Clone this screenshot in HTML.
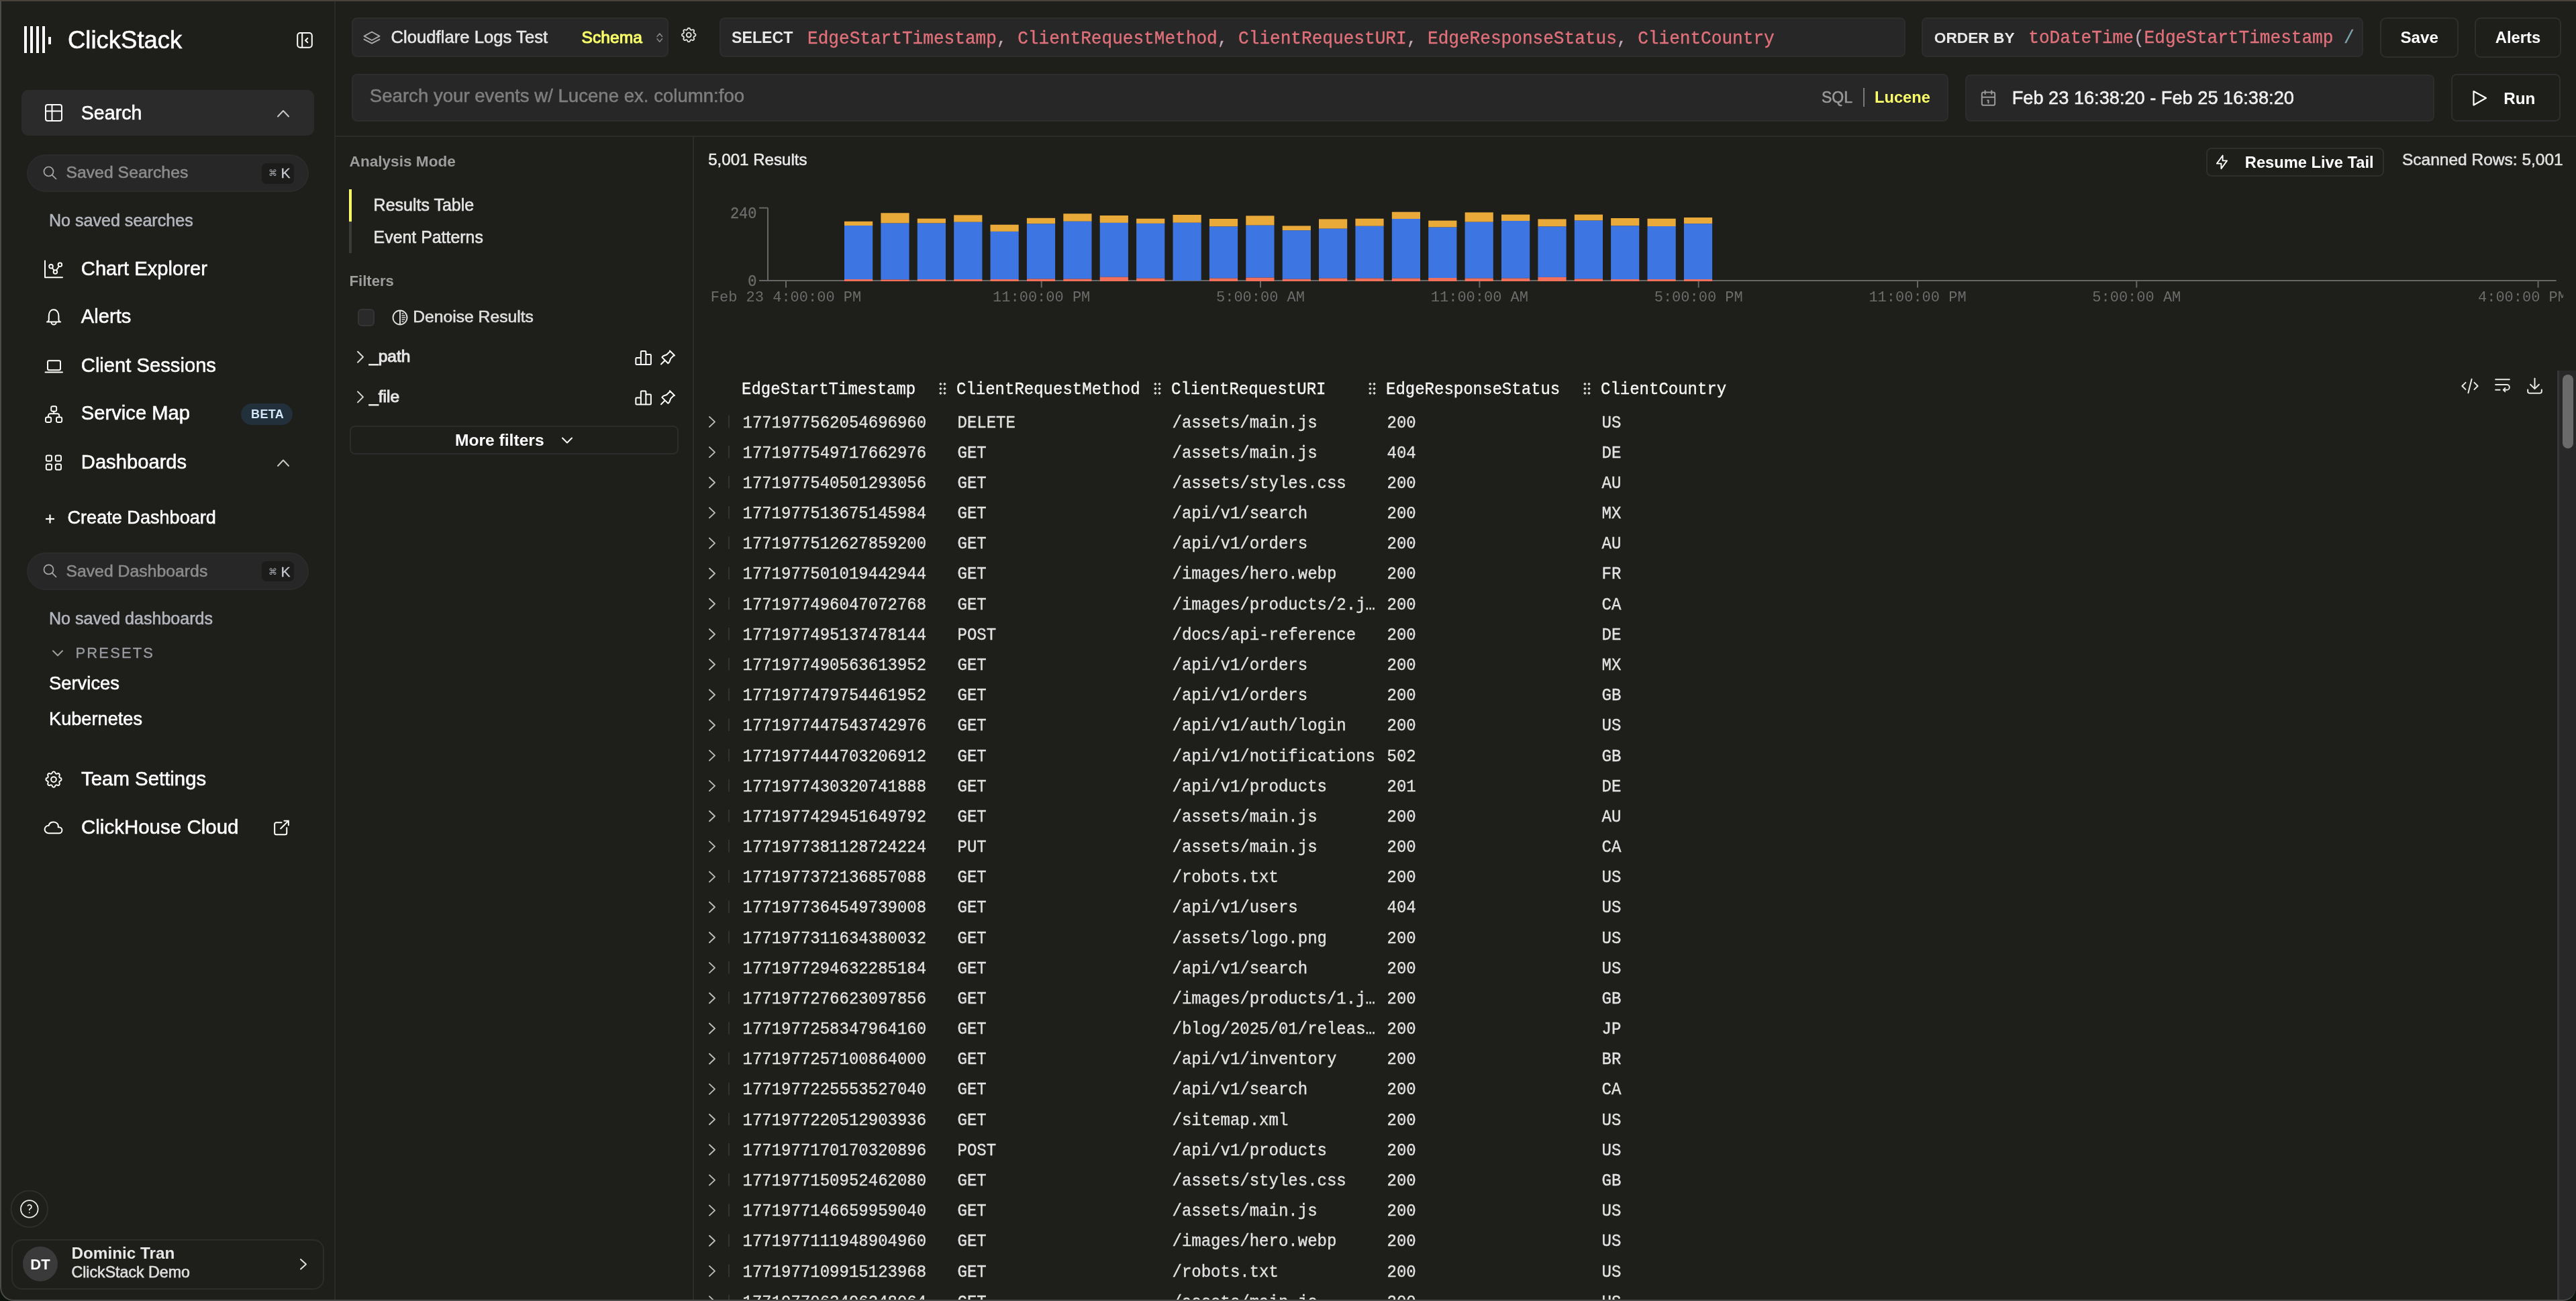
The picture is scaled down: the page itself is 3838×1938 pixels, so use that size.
<!DOCTYPE html>
<html><head><meta charset="utf-8"><title>ClickStack</title>
<style>
html,body{margin:0;padding:0;}
body{width:3838px;height:1938px;overflow:hidden;background:#0E150E;position:relative;font-family:"Liberation Sans",sans-serif;}
#win{position:absolute;left:0;top:0;width:3838px;height:1938px;background:#1E1E1B;border-radius:0 0 20px 20px;overflow:hidden;}
.t{position:absolute;white-space:nowrap;}
#txt{position:absolute;left:0;top:0;width:3838px;height:1938px;will-change:transform;}
.b{position:absolute;}
svg{position:absolute;left:0;top:0;}
#frame{position:absolute;left:0;top:0;width:3838px;height:1938px;box-sizing:border-box;border-top:2px solid #47423A;border-left:2px solid #4B4B49;border-bottom:2px solid #4B4B49;border-radius:0 0 20px 20px;}
</style></head><body><div id="win">
<div class="b" style="left:35.50px;top:38.50px;width:4.60px;height:40.80px;background:#FFFFFF;border-radius:0px;box-sizing:border-box;"></div>
<div class="b" style="left:44.50px;top:38.50px;width:4.60px;height:40.80px;background:#FFFFFF;border-radius:0px;box-sizing:border-box;"></div>
<div class="b" style="left:53.50px;top:38.50px;width:4.60px;height:40.80px;background:#FFFFFF;border-radius:0px;box-sizing:border-box;"></div>
<div class="b" style="left:62.50px;top:38.50px;width:4.60px;height:40.80px;background:#FFFFFF;border-radius:0px;box-sizing:border-box;"></div>
<div class="b" style="left:71.60px;top:54.50px;width:4.60px;height:11.00px;background:#FFFFFF;border-radius:0px;box-sizing:border-box;"></div>
<div class="b" style="left:498.00px;top:0.00px;width:2.00px;height:1936.00px;background:#2A2A28;border-radius:0px;box-sizing:border-box;"></div>
<div class="b" style="left:32.30px;top:134.40px;width:435.70px;height:67.30px;background:#2B2B2B;border-radius:10px;box-sizing:border-box;"></div>
<div class="b" style="left:40.00px;top:230.00px;width:420.00px;height:56.00px;background:#272727;border:2px solid #2B2B2B;border-radius:28.0px;box-sizing:border-box;"></div>
<div class="b" style="left:390.00px;top:243.00px;width:48.00px;height:30.50px;background:#1C1C1A;border-radius:7px;box-sizing:border-box;"></div>
<div class="b" style="left:359.30px;top:600.90px;width:76.40px;height:31.80px;background:#22303B;border-radius:16px;box-sizing:border-box;"></div>
<div class="b" style="left:40.00px;top:823.00px;width:420.00px;height:55.80px;background:#272727;border:2px solid #2B2B2B;border-radius:27.899999999999977px;box-sizing:border-box;"></div>
<div class="b" style="left:390.00px;top:835.90px;width:48.00px;height:30.50px;background:#1C1C1A;border-radius:7px;box-sizing:border-box;"></div>
<div class="b" style="left:16.50px;top:1845.80px;width:466.50px;height:75.20px;background:none;border:2px solid #2C2C2A;border-radius:16px;box-sizing:border-box;"></div>
<div class="b" style="left:524.00px;top:26.00px;width:471.50px;height:59.00px;background:#272727;border:2px solid #2D2D2D;border-radius:8px;box-sizing:border-box;"></div>
<div class="b" style="left:1072.40px;top:26.00px;width:1766.20px;height:59.00px;background:#272727;border:2px solid #2D2D2D;border-radius:8px;box-sizing:border-box;"></div>
<div class="b" style="left:2863.40px;top:26.00px;width:657.60px;height:59.00px;background:#272727;border:2px solid #2D2D2D;border-radius:8px;box-sizing:border-box;"></div>
<div class="b" style="left:3546.20px;top:25.80px;width:116.50px;height:60.20px;background:#1E1E1B;border:2px solid #2E2E2E;border-radius:9px;box-sizing:border-box;"></div>
<div class="b" style="left:3687.20px;top:25.80px;width:128.80px;height:60.20px;background:#1E1E1B;border:2px solid #2E2E2E;border-radius:9px;box-sizing:border-box;"></div>
<div class="b" style="left:524.00px;top:110.00px;width:2378.50px;height:71.00px;background:#272727;border:2px solid #2D2D2D;border-radius:8px;box-sizing:border-box;"></div>
<div class="b" style="left:2775.50px;top:131.00px;width:2.00px;height:28.00px;background:#7A7A7A;border-radius:0px;box-sizing:border-box;"></div>
<div class="b" style="left:2927.50px;top:110.50px;width:699.30px;height:70.50px;background:#272727;border:2px solid #2D2D2D;border-radius:8px;box-sizing:border-box;"></div>
<div class="b" style="left:3651.70px;top:110.00px;width:163.30px;height:71.00px;background:#1E1E1B;border:2px solid #2E2E2E;border-radius:8px;box-sizing:border-box;"></div>
<div class="b" style="left:500.00px;top:202.00px;width:3338.00px;height:2.00px;background:#2C2C2A;border-radius:0px;box-sizing:border-box;"></div>
<div class="b" style="left:1031.50px;top:204.00px;width:2.00px;height:1732.00px;background:#2C2C2A;border-radius:0px;box-sizing:border-box;"></div>
<div class="b" style="left:520.00px;top:330.00px;width:4.00px;height:47.00px;background:#3A3A3A;border-radius:0px;box-sizing:border-box;"></div>
<div class="b" style="left:520.00px;top:282.00px;width:4.00px;height:48.00px;background:#FAFF69;border-radius:0px;box-sizing:border-box;"></div>
<div class="b" style="left:532.50px;top:460.20px;width:25.10px;height:25.50px;background:#2A2A2A;border:2px solid #353535;border-radius:6px;box-sizing:border-box;"></div>
<div class="b" style="left:520.60px;top:634.00px;width:490.40px;height:43.00px;background:#1E1E1B;border:2px solid #2C2C2C;border-radius:8px;box-sizing:border-box;"></div>
<div class="b" style="left:3287.00px;top:220.20px;width:265.40px;height:42.90px;background:#1E1E1B;border:2px solid #2E2E2E;border-radius:8px;box-sizing:border-box;"></div>
<div class="b" style="left:3810.00px;top:552.00px;width:28.00px;height:1384.00px;background:#282828;border-radius:0px;box-sizing:border-box;"></div>
<div class="b" style="left:3810.00px;top:552.00px;width:2.50px;height:1384.00px;background:#363636;border-radius:0px;box-sizing:border-box;"></div>
<div class="b" style="left:3818.00px;top:558.00px;width:16.00px;height:110.00px;background:#6A6A6A;border-radius:8px;box-sizing:border-box;"></div>
<svg width="3838" height="1938" viewBox="0 0 3838 1938">
<rect x="443.2" y="49" width="21.6" height="21.7" rx="4" fill="none" stroke="#fff" stroke-width="2"/>
<line x1="450.2" y1="49" x2="450.2" y2="70.7" stroke="#fff" stroke-width="2"/>
<polyline points="458.3,57 455,60.2 458.3,63.3" fill="none" stroke="#fff" stroke-width="2" stroke-linecap="round" stroke-linejoin="round"/>
<rect x="68" y="156" width="24" height="24" rx="3" fill="none" stroke="#fff" stroke-width="2"/>
<line x1="68" y1="165.5" x2="92" y2="165.5" stroke="#fff" stroke-width="2"/><line x1="77.5" y1="156" x2="77.5" y2="180" stroke="#fff" stroke-width="2"/>
<polyline points="414,173.5 422,165 430,173.5" fill="none" stroke="#c8c8c8" stroke-width="2" stroke-linecap="round" stroke-linejoin="round"/>
<circle cx="72.5" cy="255.5" r="7" fill="none" stroke="#a8a8a8" stroke-width="1.7"/>
<line x1="77.8" y1="260.8" x2="83.5" y2="266.5" stroke="#a8a8a8" stroke-width="1.7" stroke-linecap="round"/>
<polyline points="67,388.5 67,413.2 93,413.2" fill="none" stroke="#fff" stroke-width="2" stroke-linecap="round" stroke-linejoin="round"/>
<circle cx="76" cy="396.8" r="2.8" fill="none" stroke="#fff" stroke-width="1.9"/>
<circle cx="82.4" cy="405" r="2.8" fill="none" stroke="#fff" stroke-width="1.9"/>
<circle cx="89.4" cy="394.3" r="2.8" fill="none" stroke="#fff" stroke-width="1.9"/>
<line x1="78" y1="399.3" x2="80.5" y2="402.5" stroke="#fff" stroke-width="1.9"/><line x1="84" y1="402.5" x2="88" y2="396.8" stroke="#fff" stroke-width="1.9"/>
<path d="M80 461.3 C75 461.3 72.8 466 72.8 471 L72.8 476 C72.8 478 71 479.6 70 479.6 L90.2 479.6 C89.2 479.6 87.4 478 87.4 476 L87.4 471 C87.4 466 85 461.3 80 461.3 Z" fill="none" stroke="#fff" stroke-width="2" stroke-linejoin="round"/>
<path d="M76.5 480 A3.6 3.6 0 0 0 83.7 480" fill="none" stroke="#fff" stroke-width="2"/>
<rect x="71" y="537.2" width="19" height="14" rx="2" fill="none" stroke="#fff" stroke-width="2"/>
<line x1="67.5" y1="554.6" x2="93" y2="554.6" stroke="#fff" stroke-width="2" stroke-linecap="round"/>
<rect x="76.2" y="605.2" width="8" height="7.5" rx="2.2" fill="none" stroke="#fff" stroke-width="1.9"/>
<rect x="68" y="621.5" width="8.2" height="7.5" rx="2.2" fill="none" stroke="#fff" stroke-width="1.9"/>
<rect x="84" y="621.5" width="8.2" height="7.5" rx="2.2" fill="none" stroke="#fff" stroke-width="1.9"/>
<path d="M80.2 612.7 V616.3 M72 621.5 V619 A2.7 2.7 0 0 1 74.7 616.3 H85.5 A2.7 2.7 0 0 1 88.2 619 V621.5" fill="none" stroke="#fff" stroke-width="1.9"/>
<rect x="68.8" y="678.5" width="8.2" height="8.2" rx="2" fill="none" stroke="#fff" stroke-width="1.9"/>
<rect x="82.8" y="678.5" width="8.2" height="8.2" rx="2" fill="none" stroke="#fff" stroke-width="1.9"/>
<rect x="68.8" y="691.5" width="8.2" height="8.2" rx="2" fill="none" stroke="#fff" stroke-width="1.9"/>
<rect x="82.8" y="691.5" width="8.2" height="8.2" rx="2" fill="none" stroke="#fff" stroke-width="1.9"/>
<polyline points="414,694 422,685.5 430,694" fill="none" stroke="#c8c8c8" stroke-width="2" stroke-linecap="round" stroke-linejoin="round"/>
<line x1="68" y1="773" x2="81" y2="773" stroke="#fff" stroke-width="2.2"/><line x1="74.5" y1="766.5" x2="74.5" y2="779.5" stroke="#fff" stroke-width="2.2"/>
<circle cx="72.5" cy="848.4" r="7" fill="none" stroke="#a8a8a8" stroke-width="1.7"/>
<line x1="77.8" y1="853.7" x2="83.5" y2="859.4" stroke="#a8a8a8" stroke-width="1.7" stroke-linecap="round"/>
<polyline points="79,969.5 86,976.5 93,969.5" fill="none" stroke="#a0a0a0" stroke-width="2" stroke-linecap="round" stroke-linejoin="round"/>
<g transform="translate(64.50 1145.50) scale(1.2917)" fill="none" stroke="#fff" stroke-width="1.548" stroke-linecap="round" stroke-linejoin="round"><path d="M10.325 4.317c.426 -1.756 2.924 -1.756 3.35 0a1.724 1.724 0 0 0 2.573 1.066c1.543 -.94 3.31 .826 2.37 2.37a1.724 1.724 0 0 0 1.065 2.572c1.756 .426 1.756 2.924 0 3.35a1.724 1.724 0 0 0 -1.066 2.573c.94 1.543 -.826 3.31 -2.37 2.37a1.724 1.724 0 0 0 -2.572 1.065c-.426 1.756 -2.924 1.756 -3.35 0a1.724 1.724 0 0 0 -2.573 -1.066c-1.543 .94 -3.31 -.826 -2.37 -2.37a1.724 1.724 0 0 0 -1.065 -2.572c-1.756 -.426 -1.756 -2.924 0 -3.35a1.724 1.724 0 0 0 1.066 -2.573c-.94 -1.543 .826 -3.31 2.37 -2.37c1 .608 2.296 .07 2.572 -1.065z M9 12a3 3 0 1 0 6 0a3 3 0 0 0 -6 0"/></g>
<g transform="translate(64.00 1218.00) scale(1.2917)" fill="none" stroke="#fff" stroke-width="1.548" stroke-linecap="round" stroke-linejoin="round"><path d="M6.657 18c-2.572 0 -4.657 -2.007 -4.657 -4.483c0 -2.475 2.085 -4.482 4.657 -4.482c.393 -1.762 1.794 -3.2 3.675 -3.773c1.88 -.572 3.956 -.193 5.444 1c1.488 1.19 2.162 3.007 1.77 4.769h.99c1.913 0 3.464 1.56 3.464 3.486c0 1.927 -1.551 3.487 -3.465 3.487h-11.878"/></g>
<g transform="translate(404.00 1217.50) scale(1.2917)" fill="none" stroke="#fff" stroke-width="1.548" stroke-linecap="round" stroke-linejoin="round"><path d="M12 6h-6a2 2 0 0 0 -2 2v10a2 2 0 0 0 2 2h10a2 2 0 0 0 2 -2v-6 M11 13l9 -9 M15 4h5v5"/></g>
<circle cx="43.8" cy="1800.9" r="27.2" fill="none" stroke="#2E2E2E" stroke-width="2"/>
<circle cx="43.8" cy="1800.9" r="12.8" fill="none" stroke="#ececec" stroke-width="1.8"/>
<g transform="translate(29.80 1786.50) scale(1.1667)" fill="none" stroke="#ececec" stroke-width="1.543" stroke-linecap="round" stroke-linejoin="round"><path d="M12 17l0 .01 M12 13.5a1.5 1.5 0 0 1 1 -1.5a2.6 2.6 0 1 0 -3 -4"/></g>
<circle cx="60" cy="1882.7" r="26" fill="#3A3A3A"/>
<polyline points="448,1876 456,1883.2 448,1890.4" fill="none" stroke="#e0e0e0" stroke-width="2" stroke-linecap="round" stroke-linejoin="round"/>
<path d="M554 47.5 L565.5 53.8 L554 60 L542.5 53.8 Z M542.5 58.6 L554 64.6 L565.5 58.6" fill="none" stroke="#a8a8a8" stroke-width="1.9" stroke-linejoin="round" stroke-linecap="round"/>
<polyline points="979,54.5 982.8,50 986.6,54.5" fill="none" stroke="#8a8a8a" stroke-width="1.5" stroke-linecap="round" stroke-linejoin="round"/>
<polyline points="979,57.8 982.8,62.3 986.6,57.8" fill="none" stroke="#8a8a8a" stroke-width="1.5" stroke-linecap="round" stroke-linejoin="round"/>
<g transform="translate(1012.50 38.30) scale(1.1458)" fill="none" stroke="#e0e0e0" stroke-width="1.658" stroke-linecap="round" stroke-linejoin="round"><path d="M10.325 4.317c.426 -1.756 2.924 -1.756 3.35 0a1.724 1.724 0 0 0 2.573 1.066c1.543 -.94 3.31 .826 2.37 2.37a1.724 1.724 0 0 0 1.065 2.572c1.756 .426 1.756 2.924 0 3.35a1.724 1.724 0 0 0 -1.066 2.573c.94 1.543 -.826 3.31 -2.37 2.37a1.724 1.724 0 0 0 -2.572 1.065c-.426 1.756 -2.924 1.756 -3.35 0a1.724 1.724 0 0 0 -2.573 -1.066c-1.543 .94 -3.31 -.826 -2.37 -2.37a1.724 1.724 0 0 0 -1.065 -2.572c-1.756 -.426 -1.756 -2.924 0 -3.35a1.724 1.724 0 0 0 1.066 -2.573c-.94 -1.543 .826 -3.31 2.37 -2.37c1 .608 2.296 .07 2.572 -1.065z M9 12a3 3 0 1 0 6 0a3 3 0 0 0 -6 0"/></g>
<g transform="translate(2948.00 131.50) scale(1.2083)" fill="none" stroke="#9A9A9A" stroke-width="1.655" stroke-linecap="round" stroke-linejoin="round"><path d="M4 7a2 2 0 0 1 2 -2h12a2 2 0 0 1 2 2v12a2 2 0 0 1 -2 2h-12a2 2 0 0 1 -2 -2v-12z M16 3v4 M8 3v4 M4 11h16 M11 15h1 M12 15v3"/></g>
<path d="M3685.5 136 L3704 146 L3685.5 156.5 Z" fill="none" stroke="#fff" stroke-width="2.2" stroke-linejoin="round"/>
<circle cx="596" cy="473" r="10.5" fill="none" stroke="#e0e0e0" stroke-width="1.9"/>
<line x1="596" y1="462.5" x2="596" y2="483.5" stroke="#e0e0e0" stroke-width="1.9"/>
<line x1="598.5" y1="467" x2="601.5" y2="467" stroke="#e0e0e0" stroke-width="1.4"/>
<line x1="598.5" y1="470" x2="603.5" y2="470" stroke="#e0e0e0" stroke-width="1.4"/>
<line x1="598.5" y1="473" x2="604.5" y2="473" stroke="#e0e0e0" stroke-width="1.4"/>
<line x1="598.5" y1="476" x2="603.5" y2="476" stroke="#e0e0e0" stroke-width="1.4"/>
<line x1="598.5" y1="479" x2="601.5" y2="479" stroke="#e0e0e0" stroke-width="1.4"/>
<polyline points="533,523.7 541,531.7 533,539.7" fill="none" stroke="#d8d8d8" stroke-width="2" stroke-linecap="round" stroke-linejoin="round"/>
<g transform="translate(943.60 517.90) scale(1.2500)" fill="none" stroke="#fff" stroke-width="1.600" stroke-linecap="round" stroke-linejoin="round"><path d="M3 13a1 1 0 0 1 1 -1h4a1 1 0 0 1 1 1v6a1 1 0 0 1 -1 1h-4a1 1 0 0 1 -1 -1z M15 9a1 1 0 0 1 1 -1h4a1 1 0 0 1 1 1v10a1 1 0 0 1 -1 1h-4a1 1 0 0 1 -1 -1z M9 5a1 1 0 0 1 1 -1h4a1 1 0 0 1 1 1v14a1 1 0 0 1 -1 1h-4a1 1 0 0 1 -1 -1z M4 20h14"/></g>
<g transform="translate(979.20 517.30) scale(1.2917)" fill="none" stroke="#fff" stroke-width="1.548" stroke-linecap="round" stroke-linejoin="round"><path d="M15 4.5l-4 4l-4 1.5l-1.5 1.5l7 7l1.5 -1.5l1.5 -4l4 -4 M9 15l-4.5 4.5 M14.5 4l5.5 5.5"/></g>
<polyline points="533,583.4 541,591.4 533,599.4" fill="none" stroke="#d8d8d8" stroke-width="2" stroke-linecap="round" stroke-linejoin="round"/>
<g transform="translate(943.60 577.60) scale(1.2500)" fill="none" stroke="#fff" stroke-width="1.600" stroke-linecap="round" stroke-linejoin="round"><path d="M3 13a1 1 0 0 1 1 -1h4a1 1 0 0 1 1 1v6a1 1 0 0 1 -1 1h-4a1 1 0 0 1 -1 -1z M15 9a1 1 0 0 1 1 -1h4a1 1 0 0 1 1 1v10a1 1 0 0 1 -1 1h-4a1 1 0 0 1 -1 -1z M9 5a1 1 0 0 1 1 -1h4a1 1 0 0 1 1 1v14a1 1 0 0 1 -1 1h-4a1 1 0 0 1 -1 -1z M4 20h14"/></g>
<g transform="translate(979.20 577.00) scale(1.2917)" fill="none" stroke="#fff" stroke-width="1.548" stroke-linecap="round" stroke-linejoin="round"><path d="M15 4.5l-4 4l-4 1.5l-1.5 1.5l7 7l1.5 -1.5l1.5 -4l4 -4 M9 15l-4.5 4.5 M14.5 4l5.5 5.5"/></g>
<polyline points="838,652.5 845,659.5 852,652.5" fill="none" stroke="#fff" stroke-width="2" stroke-linecap="round" stroke-linejoin="round"/>
<g transform="translate(3297.50 228.50) scale(1.0833)" fill="none" stroke="#fff" stroke-width="1.754" stroke-linecap="round" stroke-linejoin="round"><path d="M13 3l0 7l6 0l-8 11l0 -7l-6 0l8 -11"/></g>
<line x1="1144" y1="309.5" x2="1144" y2="418" stroke="#666666" stroke-width="2"/>
<line x1="1131" y1="309.7" x2="1144" y2="309.7" stroke="#666666" stroke-width="2"/>
<line x1="1131" y1="418" x2="3808.6" y2="418" stroke="#666666" stroke-width="2"/>
<line x1="1171.0" y1="418" x2="1171.0" y2="428.5" stroke="#666666" stroke-width="2"/>
<line x1="1551.7" y1="418" x2="1551.7" y2="428.5" stroke="#666666" stroke-width="2"/>
<line x1="1878.0" y1="418" x2="1878.0" y2="428.5" stroke="#666666" stroke-width="2"/>
<line x1="2204.4" y1="418" x2="2204.4" y2="428.5" stroke="#666666" stroke-width="2"/>
<line x1="2530.7" y1="418" x2="2530.7" y2="428.5" stroke="#666666" stroke-width="2"/>
<line x1="2857.0" y1="418" x2="2857.0" y2="428.5" stroke="#666666" stroke-width="2"/>
<line x1="3183.3" y1="418" x2="3183.3" y2="428.5" stroke="#666666" stroke-width="2"/>
<line x1="3781.6" y1="418" x2="3781.6" y2="428.5" stroke="#666666" stroke-width="2"/>
<rect x="1258.0" y="329.8" width="42.2" height="6.2" fill="#E9AA3A"/>
<rect x="1258.0" y="336" width="42.2" height="80.0" fill="#3D76E2"/>
<rect x="1258.0" y="416" width="42.2" height="3.0" fill="#F3705A"/>
<rect x="1312.4" y="317.3" width="42.2" height="15.3" fill="#E9AA3A"/>
<rect x="1312.4" y="332.6" width="42.2" height="83.9" fill="#3D76E2"/>
<rect x="1312.4" y="416.5" width="42.2" height="2.5" fill="#F3705A"/>
<rect x="1366.8" y="325.6" width="42.2" height="7.0" fill="#E9AA3A"/>
<rect x="1366.8" y="332.6" width="42.2" height="83.4" fill="#3D76E2"/>
<rect x="1366.8" y="416" width="42.2" height="3.0" fill="#F3705A"/>
<rect x="1421.2" y="320.4" width="42.2" height="10.4" fill="#E9AA3A"/>
<rect x="1421.2" y="330.8" width="42.2" height="85.2" fill="#3D76E2"/>
<rect x="1421.2" y="416" width="42.2" height="3.0" fill="#F3705A"/>
<rect x="1475.5" y="334.7" width="42.2" height="10.2" fill="#E9AA3A"/>
<rect x="1475.5" y="344.9" width="42.2" height="71.1" fill="#3D76E2"/>
<rect x="1475.5" y="416" width="42.2" height="3.0" fill="#F3705A"/>
<rect x="1529.9" y="324.8" width="42.2" height="8.6" fill="#E9AA3A"/>
<rect x="1529.9" y="333.4" width="42.2" height="82.1" fill="#3D76E2"/>
<rect x="1529.9" y="415.5" width="42.2" height="3.5" fill="#F3705A"/>
<rect x="1584.3" y="318.3" width="42.2" height="11.5" fill="#E9AA3A"/>
<rect x="1584.3" y="329.8" width="42.2" height="85.7" fill="#3D76E2"/>
<rect x="1584.3" y="415.5" width="42.2" height="3.5" fill="#F3705A"/>
<rect x="1638.7" y="321" width="42.2" height="10.9" fill="#E9AA3A"/>
<rect x="1638.7" y="331.9" width="42.2" height="80.8" fill="#3D76E2"/>
<rect x="1638.7" y="412.7" width="42.2" height="6.3" fill="#F3705A"/>
<rect x="1693.1" y="325.7" width="42.2" height="7.2" fill="#E9AA3A"/>
<rect x="1693.1" y="332.9" width="42.2" height="81.7" fill="#3D76E2"/>
<rect x="1693.1" y="414.6" width="42.2" height="4.4" fill="#F3705A"/>
<rect x="1747.5" y="320" width="42.2" height="11.8" fill="#E9AA3A"/>
<rect x="1747.5" y="331.8" width="42.2" height="86.2" fill="#3D76E2"/>
<rect x="1801.9" y="326" width="42.2" height="11.5" fill="#E9AA3A"/>
<rect x="1801.9" y="337.5" width="42.2" height="77.1" fill="#3D76E2"/>
<rect x="1801.9" y="414.6" width="42.2" height="4.4" fill="#F3705A"/>
<rect x="1856.3" y="321.4" width="42.2" height="14.3" fill="#E9AA3A"/>
<rect x="1856.3" y="335.7" width="42.2" height="77.9" fill="#3D76E2"/>
<rect x="1856.3" y="413.6" width="42.2" height="5.4" fill="#F3705A"/>
<rect x="1910.7" y="336.4" width="42.2" height="6.8" fill="#E9AA3A"/>
<rect x="1910.7" y="343.2" width="42.2" height="72.5" fill="#3D76E2"/>
<rect x="1910.7" y="415.7" width="42.2" height="3.3" fill="#F3705A"/>
<rect x="1965.0" y="326.4" width="42.2" height="14.3" fill="#E9AA3A"/>
<rect x="1965.0" y="340.7" width="42.2" height="73.9" fill="#3D76E2"/>
<rect x="1965.0" y="414.6" width="42.2" height="4.4" fill="#F3705A"/>
<rect x="2019.4" y="325.7" width="42.2" height="11.1" fill="#E9AA3A"/>
<rect x="2019.4" y="336.8" width="42.2" height="77.8" fill="#3D76E2"/>
<rect x="2019.4" y="414.6" width="42.2" height="4.4" fill="#F3705A"/>
<rect x="2073.8" y="315.7" width="42.2" height="10.3" fill="#E9AA3A"/>
<rect x="2073.8" y="326" width="42.2" height="88.6" fill="#3D76E2"/>
<rect x="2073.8" y="414.6" width="42.2" height="4.4" fill="#F3705A"/>
<rect x="2128.2" y="328.6" width="42.2" height="10.0" fill="#E9AA3A"/>
<rect x="2128.2" y="338.6" width="42.2" height="75.4" fill="#3D76E2"/>
<rect x="2128.2" y="414" width="42.2" height="5.0" fill="#F3705A"/>
<rect x="2182.6" y="316.4" width="42.2" height="14.3" fill="#E9AA3A"/>
<rect x="2182.6" y="330.7" width="42.2" height="83.9" fill="#3D76E2"/>
<rect x="2182.6" y="414.6" width="42.2" height="4.4" fill="#F3705A"/>
<rect x="2237.0" y="319.6" width="42.2" height="9.4" fill="#E9AA3A"/>
<rect x="2237.0" y="329" width="42.2" height="85.6" fill="#3D76E2"/>
<rect x="2237.0" y="414.6" width="42.2" height="4.4" fill="#F3705A"/>
<rect x="2291.4" y="326.4" width="42.2" height="11.1" fill="#E9AA3A"/>
<rect x="2291.4" y="337.5" width="42.2" height="75.4" fill="#3D76E2"/>
<rect x="2291.4" y="412.9" width="42.2" height="6.1" fill="#F3705A"/>
<rect x="2345.8" y="319.6" width="42.2" height="9.0" fill="#E9AA3A"/>
<rect x="2345.8" y="328.6" width="42.2" height="86.8" fill="#3D76E2"/>
<rect x="2345.8" y="415.4" width="42.2" height="3.6" fill="#F3705A"/>
<rect x="2400.1" y="325" width="42.2" height="11.4" fill="#E9AA3A"/>
<rect x="2400.1" y="336.4" width="42.2" height="79.6" fill="#3D76E2"/>
<rect x="2400.1" y="416" width="42.2" height="3.0" fill="#F3705A"/>
<rect x="2454.5" y="325.7" width="42.2" height="11.3" fill="#E9AA3A"/>
<rect x="2454.5" y="337" width="42.2" height="79.0" fill="#3D76E2"/>
<rect x="2454.5" y="416" width="42.2" height="3.0" fill="#F3705A"/>
<rect x="2508.9" y="324" width="42.2" height="9.2" fill="#E9AA3A"/>
<rect x="2508.9" y="333.2" width="42.2" height="82.8" fill="#3D76E2"/>
<rect x="2508.9" y="416" width="42.2" height="3.0" fill="#F3705A"/>
<rect x="1399.80" y="570.40" width="3.2" height="3.2" fill="#dcdcdc" transform="rotate(45 1401.40 572.00)"/>
<rect x="1399.80" y="577.30" width="3.2" height="3.2" fill="#dcdcdc" transform="rotate(45 1401.40 578.90)"/>
<rect x="1399.80" y="584.20" width="3.2" height="3.2" fill="#dcdcdc" transform="rotate(45 1401.40 585.80)"/>
<rect x="1405.90" y="570.40" width="3.2" height="3.2" fill="#dcdcdc" transform="rotate(45 1407.50 572.00)"/>
<rect x="1405.90" y="577.30" width="3.2" height="3.2" fill="#dcdcdc" transform="rotate(45 1407.50 578.90)"/>
<rect x="1405.90" y="584.20" width="3.2" height="3.2" fill="#dcdcdc" transform="rotate(45 1407.50 585.80)"/>
<rect x="1719.80" y="570.40" width="3.2" height="3.2" fill="#dcdcdc" transform="rotate(45 1721.40 572.00)"/>
<rect x="1719.80" y="577.30" width="3.2" height="3.2" fill="#dcdcdc" transform="rotate(45 1721.40 578.90)"/>
<rect x="1719.80" y="584.20" width="3.2" height="3.2" fill="#dcdcdc" transform="rotate(45 1721.40 585.80)"/>
<rect x="1725.90" y="570.40" width="3.2" height="3.2" fill="#dcdcdc" transform="rotate(45 1727.50 572.00)"/>
<rect x="1725.90" y="577.30" width="3.2" height="3.2" fill="#dcdcdc" transform="rotate(45 1727.50 578.90)"/>
<rect x="1725.90" y="584.20" width="3.2" height="3.2" fill="#dcdcdc" transform="rotate(45 1727.50 585.80)"/>
<rect x="2039.80" y="570.40" width="3.2" height="3.2" fill="#dcdcdc" transform="rotate(45 2041.40 572.00)"/>
<rect x="2039.80" y="577.30" width="3.2" height="3.2" fill="#dcdcdc" transform="rotate(45 2041.40 578.90)"/>
<rect x="2039.80" y="584.20" width="3.2" height="3.2" fill="#dcdcdc" transform="rotate(45 2041.40 585.80)"/>
<rect x="2045.90" y="570.40" width="3.2" height="3.2" fill="#dcdcdc" transform="rotate(45 2047.50 572.00)"/>
<rect x="2045.90" y="577.30" width="3.2" height="3.2" fill="#dcdcdc" transform="rotate(45 2047.50 578.90)"/>
<rect x="2045.90" y="584.20" width="3.2" height="3.2" fill="#dcdcdc" transform="rotate(45 2047.50 585.80)"/>
<rect x="2359.80" y="570.40" width="3.2" height="3.2" fill="#dcdcdc" transform="rotate(45 2361.40 572.00)"/>
<rect x="2359.80" y="577.30" width="3.2" height="3.2" fill="#dcdcdc" transform="rotate(45 2361.40 578.90)"/>
<rect x="2359.80" y="584.20" width="3.2" height="3.2" fill="#dcdcdc" transform="rotate(45 2361.40 585.80)"/>
<rect x="2365.90" y="570.40" width="3.2" height="3.2" fill="#dcdcdc" transform="rotate(45 2367.50 572.00)"/>
<rect x="2365.90" y="577.30" width="3.2" height="3.2" fill="#dcdcdc" transform="rotate(45 2367.50 578.90)"/>
<rect x="2365.90" y="584.20" width="3.2" height="3.2" fill="#dcdcdc" transform="rotate(45 2367.50 585.80)"/>
<g transform="translate(3664.50 559.50) scale(1.2917)" fill="none" stroke="#e8e8e8" stroke-width="1.548" stroke-linecap="round" stroke-linejoin="round"><path d="M7 8l-4 4l4 4 M17 8l4 4l-4 4 M14 4l-4 16"/></g>
<g transform="translate(3713.00 557.50) scale(1.2917)" fill="none" stroke="#e8e8e8" stroke-width="1.548" stroke-linecap="round" stroke-linejoin="round"><path d="M4 6l16 0 M4 18l5 0 M4 12h13a3 3 0 0 1 0 6h-4l2 -2m0 4l-2 -2"/></g>
<g transform="translate(3761.00 558.50) scale(1.2917)" fill="none" stroke="#e8e8e8" stroke-width="1.548" stroke-linecap="round" stroke-linejoin="round"><path d="M4 17v2a2 2 0 0 0 2 2h12a2 2 0 0 0 2 -2v-2 M7 11l5 5l5 -5 M12 4l0 12"/></g>
<polyline points="1057,620.9 1065,628.4 1057,635.9" fill="none" stroke="#bdbdbd" stroke-width="1.9" stroke-linecap="round" stroke-linejoin="round"/>
<line x1="1086" y1="618.6" x2="1086" y2="637.2" stroke="#3A3A3A" stroke-width="1.5"/>
<polyline points="1057,666.1 1065,673.6 1057,681.1" fill="none" stroke="#bdbdbd" stroke-width="1.9" stroke-linecap="round" stroke-linejoin="round"/>
<line x1="1086" y1="663.8" x2="1086" y2="682.4" stroke="#3A3A3A" stroke-width="1.5"/>
<polyline points="1057,711.3 1065,718.8 1057,726.3" fill="none" stroke="#bdbdbd" stroke-width="1.9" stroke-linecap="round" stroke-linejoin="round"/>
<line x1="1086" y1="709.0" x2="1086" y2="727.6" stroke="#3A3A3A" stroke-width="1.5"/>
<polyline points="1057,756.4 1065,763.9 1057,771.4" fill="none" stroke="#bdbdbd" stroke-width="1.9" stroke-linecap="round" stroke-linejoin="round"/>
<line x1="1086" y1="754.1" x2="1086" y2="772.7" stroke="#3A3A3A" stroke-width="1.5"/>
<polyline points="1057,801.6 1065,809.1 1057,816.6" fill="none" stroke="#bdbdbd" stroke-width="1.9" stroke-linecap="round" stroke-linejoin="round"/>
<line x1="1086" y1="799.3" x2="1086" y2="817.9" stroke="#3A3A3A" stroke-width="1.5"/>
<polyline points="1057,846.8 1065,854.3 1057,861.8" fill="none" stroke="#bdbdbd" stroke-width="1.9" stroke-linecap="round" stroke-linejoin="round"/>
<line x1="1086" y1="844.5" x2="1086" y2="863.1" stroke="#3A3A3A" stroke-width="1.5"/>
<polyline points="1057,892.0 1065,899.5 1057,907.0" fill="none" stroke="#bdbdbd" stroke-width="1.9" stroke-linecap="round" stroke-linejoin="round"/>
<line x1="1086" y1="889.7" x2="1086" y2="908.3" stroke="#3A3A3A" stroke-width="1.5"/>
<polyline points="1057,937.2 1065,944.7 1057,952.2" fill="none" stroke="#bdbdbd" stroke-width="1.9" stroke-linecap="round" stroke-linejoin="round"/>
<line x1="1086" y1="934.9" x2="1086" y2="953.5" stroke="#3A3A3A" stroke-width="1.5"/>
<polyline points="1057,982.3 1065,989.8 1057,997.3" fill="none" stroke="#bdbdbd" stroke-width="1.9" stroke-linecap="round" stroke-linejoin="round"/>
<line x1="1086" y1="980.0" x2="1086" y2="998.6" stroke="#3A3A3A" stroke-width="1.5"/>
<polyline points="1057,1027.5 1065,1035.0 1057,1042.5" fill="none" stroke="#bdbdbd" stroke-width="1.9" stroke-linecap="round" stroke-linejoin="round"/>
<line x1="1086" y1="1025.2" x2="1086" y2="1043.8" stroke="#3A3A3A" stroke-width="1.5"/>
<polyline points="1057,1072.7 1065,1080.2 1057,1087.7" fill="none" stroke="#bdbdbd" stroke-width="1.9" stroke-linecap="round" stroke-linejoin="round"/>
<line x1="1086" y1="1070.4" x2="1086" y2="1089.0" stroke="#3A3A3A" stroke-width="1.5"/>
<polyline points="1057,1117.9 1065,1125.4 1057,1132.9" fill="none" stroke="#bdbdbd" stroke-width="1.9" stroke-linecap="round" stroke-linejoin="round"/>
<line x1="1086" y1="1115.6" x2="1086" y2="1134.2" stroke="#3A3A3A" stroke-width="1.5"/>
<polyline points="1057,1163.1 1065,1170.6 1057,1178.1" fill="none" stroke="#bdbdbd" stroke-width="1.9" stroke-linecap="round" stroke-linejoin="round"/>
<line x1="1086" y1="1160.8" x2="1086" y2="1179.4" stroke="#3A3A3A" stroke-width="1.5"/>
<polyline points="1057,1208.2 1065,1215.7 1057,1223.2" fill="none" stroke="#bdbdbd" stroke-width="1.9" stroke-linecap="round" stroke-linejoin="round"/>
<line x1="1086" y1="1205.9" x2="1086" y2="1224.5" stroke="#3A3A3A" stroke-width="1.5"/>
<polyline points="1057,1253.4 1065,1260.9 1057,1268.4" fill="none" stroke="#bdbdbd" stroke-width="1.9" stroke-linecap="round" stroke-linejoin="round"/>
<line x1="1086" y1="1251.1" x2="1086" y2="1269.7" stroke="#3A3A3A" stroke-width="1.5"/>
<polyline points="1057,1298.6 1065,1306.1 1057,1313.6" fill="none" stroke="#bdbdbd" stroke-width="1.9" stroke-linecap="round" stroke-linejoin="round"/>
<line x1="1086" y1="1296.3" x2="1086" y2="1314.9" stroke="#3A3A3A" stroke-width="1.5"/>
<polyline points="1057,1343.8 1065,1351.3 1057,1358.8" fill="none" stroke="#bdbdbd" stroke-width="1.9" stroke-linecap="round" stroke-linejoin="round"/>
<line x1="1086" y1="1341.5" x2="1086" y2="1360.1" stroke="#3A3A3A" stroke-width="1.5"/>
<polyline points="1057,1389.0 1065,1396.5 1057,1404.0" fill="none" stroke="#bdbdbd" stroke-width="1.9" stroke-linecap="round" stroke-linejoin="round"/>
<line x1="1086" y1="1386.7" x2="1086" y2="1405.3" stroke="#3A3A3A" stroke-width="1.5"/>
<polyline points="1057,1434.1 1065,1441.6 1057,1449.1" fill="none" stroke="#bdbdbd" stroke-width="1.9" stroke-linecap="round" stroke-linejoin="round"/>
<line x1="1086" y1="1431.8" x2="1086" y2="1450.4" stroke="#3A3A3A" stroke-width="1.5"/>
<polyline points="1057,1479.3 1065,1486.8 1057,1494.3" fill="none" stroke="#bdbdbd" stroke-width="1.9" stroke-linecap="round" stroke-linejoin="round"/>
<line x1="1086" y1="1477.0" x2="1086" y2="1495.6" stroke="#3A3A3A" stroke-width="1.5"/>
<polyline points="1057,1524.5 1065,1532.0 1057,1539.5" fill="none" stroke="#bdbdbd" stroke-width="1.9" stroke-linecap="round" stroke-linejoin="round"/>
<line x1="1086" y1="1522.2" x2="1086" y2="1540.8" stroke="#3A3A3A" stroke-width="1.5"/>
<polyline points="1057,1569.7 1065,1577.2 1057,1584.7" fill="none" stroke="#bdbdbd" stroke-width="1.9" stroke-linecap="round" stroke-linejoin="round"/>
<line x1="1086" y1="1567.4" x2="1086" y2="1586.0" stroke="#3A3A3A" stroke-width="1.5"/>
<polyline points="1057,1614.9 1065,1622.4 1057,1629.9" fill="none" stroke="#bdbdbd" stroke-width="1.9" stroke-linecap="round" stroke-linejoin="round"/>
<line x1="1086" y1="1612.6" x2="1086" y2="1631.2" stroke="#3A3A3A" stroke-width="1.5"/>
<polyline points="1057,1660.0 1065,1667.5 1057,1675.0" fill="none" stroke="#bdbdbd" stroke-width="1.9" stroke-linecap="round" stroke-linejoin="round"/>
<line x1="1086" y1="1657.7" x2="1086" y2="1676.3" stroke="#3A3A3A" stroke-width="1.5"/>
<polyline points="1057,1705.2 1065,1712.7 1057,1720.2" fill="none" stroke="#bdbdbd" stroke-width="1.9" stroke-linecap="round" stroke-linejoin="round"/>
<line x1="1086" y1="1702.9" x2="1086" y2="1721.5" stroke="#3A3A3A" stroke-width="1.5"/>
<polyline points="1057,1750.4 1065,1757.9 1057,1765.4" fill="none" stroke="#bdbdbd" stroke-width="1.9" stroke-linecap="round" stroke-linejoin="round"/>
<line x1="1086" y1="1748.1" x2="1086" y2="1766.7" stroke="#3A3A3A" stroke-width="1.5"/>
<polyline points="1057,1795.6 1065,1803.1 1057,1810.6" fill="none" stroke="#bdbdbd" stroke-width="1.9" stroke-linecap="round" stroke-linejoin="round"/>
<line x1="1086" y1="1793.3" x2="1086" y2="1811.9" stroke="#3A3A3A" stroke-width="1.5"/>
<polyline points="1057,1840.8 1065,1848.3 1057,1855.8" fill="none" stroke="#bdbdbd" stroke-width="1.9" stroke-linecap="round" stroke-linejoin="round"/>
<line x1="1086" y1="1838.5" x2="1086" y2="1857.1" stroke="#3A3A3A" stroke-width="1.5"/>
<polyline points="1057,1885.9 1065,1893.4 1057,1900.9" fill="none" stroke="#bdbdbd" stroke-width="1.9" stroke-linecap="round" stroke-linejoin="round"/>
<line x1="1086" y1="1883.6" x2="1086" y2="1902.2" stroke="#3A3A3A" stroke-width="1.5"/>
<polyline points="1057,1931.1 1065,1938.6 1057,1946.1" fill="none" stroke="#bdbdbd" stroke-width="1.9" stroke-linecap="round" stroke-linejoin="round"/>
<line x1="1086" y1="1928.8" x2="1086" y2="1947.4" stroke="#3A3A3A" stroke-width="1.5"/>
</svg>
<div id="txt">
<div class="t" style="left:101.00px;top:42.32px;font-size:36.5px;line-height:36.5px;color:#FFFFFF;font-weight:400;font-family:'Liberation Sans', sans-serif;-webkit-text-stroke:0.55px #FFFFFF;">ClickStack</div>
<div class="t" style="left:120.80px;top:153.50px;font-size:28.6px;line-height:28.6px;color:#FFFFFF;font-weight:400;font-family:'Liberation Sans', sans-serif;-webkit-text-stroke:0.55px #FFFFFF;">Search</div>
<div class="t" style="left:98.40px;top:245.02px;font-size:24.8px;line-height:24.8px;color:#8C8C8C;font-weight:400;font-family:'Liberation Sans', sans-serif;-webkit-text-stroke:0.55px #8C8C8C;">Saved Searches</div>
<div class="t" style="left:400.00px;top:252.43px;font-size:12.5px;line-height:12.5px;color:#a8acb4;font-weight:400;font-family:'Liberation Sans', sans-serif;">&#8984;</div>
<div class="t" style="left:418.50px;top:247.23px;font-size:21px;line-height:21px;color:#c8cbd2;font-weight:400;font-family:'Liberation Sans', sans-serif;-webkit-text-stroke:0.3px #c8cbd2;">K</div>
<div class="t" style="left:72.90px;top:316.07px;font-size:25.1px;line-height:25.1px;color:#B3B6BD;font-weight:400;font-family:'Liberation Sans', sans-serif;-webkit-text-stroke:0.55px #B3B6BD;">No saved searches</div>
<div class="t" style="left:120.80px;top:386.00px;font-size:29.2px;line-height:29.2px;color:#ffffff;font-weight:400;font-family:'Liberation Sans', sans-serif;-webkit-text-stroke:0.55px #ffffff;">Chart Explorer</div>
<div class="t" style="left:120.80px;top:457.10px;font-size:29.2px;line-height:29.2px;color:#ffffff;font-weight:400;font-family:'Liberation Sans', sans-serif;-webkit-text-stroke:0.55px #ffffff;">Alerts</div>
<div class="t" style="left:120.80px;top:529.80px;font-size:29.2px;line-height:29.2px;color:#ffffff;font-weight:400;font-family:'Liberation Sans', sans-serif;-webkit-text-stroke:0.55px #ffffff;">Client Sessions</div>
<div class="t" style="left:120.80px;top:600.90px;font-size:29.2px;line-height:29.2px;color:#ffffff;font-weight:400;font-family:'Liberation Sans', sans-serif;-webkit-text-stroke:0.55px #ffffff;">Service Map</div>
<div class="t" style="left:374.00px;top:607.77px;font-size:18px;line-height:18px;color:#D3E7FA;font-weight:700;font-family:'Liberation Sans', sans-serif;letter-spacing:0.4px;">BETA</div>
<div class="t" style="left:120.80px;top:673.60px;font-size:29.2px;line-height:29.2px;color:#ffffff;font-weight:400;font-family:'Liberation Sans', sans-serif;-webkit-text-stroke:0.55px #ffffff;">Dashboards</div>
<div class="t" style="left:100.50px;top:757.27px;font-size:27.1px;line-height:27.1px;color:#ffffff;font-weight:400;font-family:'Liberation Sans', sans-serif;-webkit-text-stroke:0.55px #ffffff;">Create Dashboard</div>
<div class="t" style="left:98.40px;top:838.62px;font-size:24.8px;line-height:24.8px;color:#8C8C8C;font-weight:400;font-family:'Liberation Sans', sans-serif;-webkit-text-stroke:0.55px #8C8C8C;">Saved Dashboards</div>
<div class="t" style="left:400.00px;top:846.02px;font-size:12.5px;line-height:12.5px;color:#a8acb4;font-weight:400;font-family:'Liberation Sans', sans-serif;">&#8984;</div>
<div class="t" style="left:418.50px;top:840.83px;font-size:21px;line-height:21px;color:#c8cbd2;font-weight:400;font-family:'Liberation Sans', sans-serif;-webkit-text-stroke:0.3px #c8cbd2;">K</div>
<div class="t" style="left:73.00px;top:908.77px;font-size:25.1px;line-height:25.1px;color:#B3B6BD;font-weight:400;font-family:'Liberation Sans', sans-serif;-webkit-text-stroke:0.55px #B3B6BD;">No saved dashboards</div>
<div class="t" style="left:112.60px;top:961.99px;font-size:22px;line-height:22px;color:#9A9CA2;font-weight:400;font-family:'Liberation Sans', sans-serif;-webkit-text-stroke:0.3px #9A9CA2;letter-spacing:2.1px;">PRESETS</div>
<div class="t" style="left:73.00px;top:1003.52px;font-size:27.4px;line-height:27.4px;color:#ffffff;font-weight:400;font-family:'Liberation Sans', sans-serif;-webkit-text-stroke:0.55px #ffffff;">Services</div>
<div class="t" style="left:73.00px;top:1056.79px;font-size:27.2px;line-height:27.2px;color:#ffffff;font-weight:400;font-family:'Liberation Sans', sans-serif;-webkit-text-stroke:0.55px #ffffff;">Kubernetes</div>
<div class="t" style="left:121.00px;top:1144.83px;font-size:29.4px;line-height:29.4px;color:#ffffff;font-weight:400;font-family:'Liberation Sans', sans-serif;-webkit-text-stroke:0.55px #ffffff;">Team Settings</div>
<div class="t" style="left:121.00px;top:1217.04px;font-size:29.5px;line-height:29.5px;color:#ffffff;font-weight:400;font-family:'Liberation Sans', sans-serif;-webkit-text-stroke:0.55px #ffffff;">ClickHouse Cloud</div>
<div class="t" style="left:60.00px;top:1873.39px;font-size:22px;line-height:22px;color:#fff;font-weight:700;font-family:'Liberation Sans', sans-serif;transform:translateX(-50%);">DT</div>
<div class="t" style="left:106.40px;top:1855.44px;font-size:24.3px;line-height:24.3px;color:#E8E8E8;font-weight:700;font-family:'Liberation Sans', sans-serif;">Dominic Tran</div>
<div class="t" style="left:106.40px;top:1884.37px;font-size:23.2px;line-height:23.2px;color:#E0E0E0;font-weight:400;font-family:'Liberation Sans', sans-serif;-webkit-text-stroke:0.55px #E0E0E0;">ClickStack Demo</div>
<div class="t" style="left:582.50px;top:43.46px;font-size:25.7px;line-height:25.7px;color:#E6E6E6;font-weight:400;font-family:'Liberation Sans', sans-serif;-webkit-text-stroke:0.55px #E6E6E6;">Cloudflare Logs Test</div>
<div class="t" style="left:866.60px;top:44.39px;font-size:24.6px;line-height:24.6px;color:#FAFF69;font-weight:400;font-family:'Liberation Sans', sans-serif;-webkit-text-stroke:1.0px #FAFF69;">Schema</div>
<div class="t" style="left:1090.00px;top:45.17px;font-size:23.2px;line-height:23.2px;color:#E8E8E8;font-weight:700;font-family:'Liberation Sans', sans-serif;">SELECT</div>
<div class="t" style="left:1203.00px;top:44.81px;font-size:26.1px;line-height:26.1px;color:#E0707A;font-weight:400;font-family:'Liberation Mono', monospace;-webkit-text-stroke:0.35px #E0707A;white-space:pre;transform:scaleY(1.08);transform-origin:0 19.99px;"><span style="color:#E0707A">EdgeStartTimestamp</span><span style="color:#AEB8C8">,</span> <span style="color:#E0707A">ClientRequestMethod</span><span style="color:#AEB8C8">,</span> <span style="color:#E0707A">ClientRequestURI</span><span style="color:#AEB8C8">,</span> <span style="color:#E0707A">EdgeResponseStatus</span><span style="color:#AEB8C8">,</span> <span style="color:#E0707A">ClientCountry</span></div>
<div class="t" style="left:2881.80px;top:45.20px;font-size:22.7px;line-height:22.7px;color:#E8E8E8;font-weight:700;font-family:'Liberation Sans', sans-serif;">ORDER BY</div>
<div class="t" style="left:3022.30px;top:44.41px;font-size:26.1px;line-height:26.1px;color:#E0707A;font-weight:400;font-family:'Liberation Mono', monospace;-webkit-text-stroke:0.35px #E0707A;white-space:pre;width:490px;overflow:hidden;transform:scaleY(1.08);transform-origin:0 19.99px;"><span style="color:#E0707A">toDateTime</span><span style="color:#AEB8C8">(</span><span style="color:#E0707A">EdgeStartTimestamp</span> <span style="color:#56B6C2">/</span> <span style="color:#D19A66">1000000000</span><span style="color:#AEB8C8">)</span></div>
<div class="t" style="left:3604.70px;top:44.13px;font-size:24.2px;line-height:24.2px;color:#fff;font-weight:700;font-family:'Liberation Sans', sans-serif;transform:translateX(-50%);">Save</div>
<div class="t" style="left:3751.50px;top:44.47px;font-size:23.8px;line-height:23.8px;color:#fff;font-weight:700;font-family:'Liberation Sans', sans-serif;transform:translateX(-50%);">Alerts</div>
<div class="t" style="left:550.80px;top:128.85px;font-size:27.6px;line-height:27.6px;color:#7E7E7E;font-weight:400;font-family:'Liberation Sans', sans-serif;-webkit-text-stroke:0.55px #7E7E7E;">Search your events w/ Lucene ex. column:foo</div>
<div class="t" style="left:2714.00px;top:134.24px;font-size:23px;line-height:23px;color:#9A9A9A;font-weight:400;font-family:'Liberation Sans', sans-serif;-webkit-text-stroke:0.55px #9A9A9A;">SQL</div>
<div class="t" style="left:2793.00px;top:133.65px;font-size:23.7px;line-height:23.7px;color:#FAFF69;font-weight:700;font-family:'Liberation Sans', sans-serif;">Lucene</div>
<div class="t" style="left:2997.70px;top:132.39px;font-size:27.2px;line-height:27.2px;color:#F0F0F0;font-weight:400;font-family:'Liberation Sans', sans-serif;-webkit-text-stroke:0.55px #F0F0F0;">Feb 23 16:38:20 - Feb 25 16:38:20</div>
<div class="t" style="left:3730.30px;top:134.93px;font-size:24.2px;line-height:24.2px;color:#fff;font-weight:700;font-family:'Liberation Sans', sans-serif;">Run</div>
<div class="t" style="left:520.60px;top:230.48px;font-size:22.6px;line-height:22.6px;color:#9D9D9D;font-weight:700;font-family:'Liberation Sans', sans-serif;">Analysis Mode</div>
<div class="t" style="left:556.60px;top:293.45px;font-size:25px;line-height:25px;color:#E6E6E6;font-weight:400;font-family:'Liberation Sans', sans-serif;-webkit-text-stroke:0.55px #E6E6E6;">Results Table</div>
<div class="t" style="left:556.60px;top:341.33px;font-size:24.9px;line-height:24.9px;color:#E6E6E6;font-weight:400;font-family:'Liberation Sans', sans-serif;-webkit-text-stroke:0.55px #E6E6E6;">Event Patterns</div>
<div class="t" style="left:520.60px;top:408.30px;font-size:22.1px;line-height:22.1px;color:#9D9D9D;font-weight:700;font-family:'Liberation Sans', sans-serif;">Filters</div>
<div class="t" style="left:615.20px;top:460.30px;font-size:24.7px;line-height:24.7px;color:#E0E0E0;font-weight:400;font-family:'Liberation Sans', sans-serif;-webkit-text-stroke:0.55px #E0E0E0;">Denoise Results</div>
<div class="t" style="left:550.00px;top:519.39px;font-size:24.6px;line-height:24.6px;color:#E6E6E6;font-weight:400;font-family:'Liberation Sans', sans-serif;-webkit-text-stroke:1.0px #E6E6E6;">_path</div>
<div class="t" style="left:550.00px;top:579.09px;font-size:24.6px;line-height:24.6px;color:#E6E6E6;font-weight:400;font-family:'Liberation Sans', sans-serif;-webkit-text-stroke:1.0px #E6E6E6;">_file</div>
<div class="t" style="left:678.00px;top:644.19px;font-size:24.6px;line-height:24.6px;color:#fff;font-weight:700;font-family:'Liberation Sans', sans-serif;">More filters</div>
<div class="t" style="left:1055.20px;top:225.91px;font-size:24.1px;line-height:24.1px;color:#EAEAEA;font-weight:400;font-family:'Liberation Sans', sans-serif;-webkit-text-stroke:0.55px #EAEAEA;">5,001 Results</div>
<div class="t" style="left:3344.80px;top:230.95px;font-size:23.7px;line-height:23.7px;color:#fff;font-weight:700;font-family:'Liberation Sans', sans-serif;">Resume Live Tail</div>
<div class="t" style="left:3579.00px;top:225.87px;font-size:24.5px;line-height:24.5px;color:#E0E0E0;font-weight:400;font-family:'Liberation Sans', sans-serif;-webkit-text-stroke:0.55px #E0E0E0;">Scanned Rows: 5,001</div>
<div class="t" style="right:2710.50px;top:309.15px;font-size:22px;line-height:22px;color:#6C6C6C;font-weight:400;font-family:'Liberation Mono', monospace;-webkit-text-stroke:0.35px #6C6C6C;transform:scaleY(1.08);transform-origin:0 16.85px;">240</div>
<div class="t" style="right:2710.50px;top:409.65px;font-size:22px;line-height:22px;color:#6C6C6C;font-weight:400;font-family:'Liberation Mono', monospace;-webkit-text-stroke:0.35px #6C6C6C;transform:scaleY(1.08);transform-origin:0 16.85px;">0</div>
<div class="t" style="left:1058.8px;top:433.1px;font-size:22px;line-height:22px;color:#6C6C6C;font-family:'Liberation Mono',monospace;">Feb 23 4:00:00 PM</div>
<div class="t" style="left:1479.1px;top:433.1px;font-size:22px;line-height:22px;color:#6C6C6C;font-family:'Liberation Mono',monospace;">11:00:00 PM</div>
<div class="t" style="left:1812.0px;top:433.1px;font-size:22px;line-height:22px;color:#6C6C6C;font-family:'Liberation Mono',monospace;">5:00:00 AM</div>
<div class="t" style="left:2131.8px;top:433.1px;font-size:22px;line-height:22px;color:#6C6C6C;font-family:'Liberation Mono',monospace;">11:00:00 AM</div>
<div class="t" style="left:2464.7px;top:433.1px;font-size:22px;line-height:22px;color:#6C6C6C;font-family:'Liberation Mono',monospace;">5:00:00 PM</div>
<div class="t" style="left:2784.4px;top:433.1px;font-size:22px;line-height:22px;color:#6C6C6C;font-family:'Liberation Mono',monospace;">11:00:00 PM</div>
<div class="t" style="left:3117.3px;top:433.1px;font-size:22px;line-height:22px;color:#6C6C6C;font-family:'Liberation Mono',monospace;">5:00:00 AM</div>
<div class="t" style="left:3692px;top:433.1px;width:127px;overflow:hidden;font-size:22px;line-height:22px;color:#6C6C6C;font-family:'Liberation Mono',monospace;">4:00:00 PM</div>
<div class="t" style="left:1105.00px;top:568.62px;font-size:24px;line-height:24px;color:#F5F5F5;font-weight:400;font-family:'Liberation Mono', monospace;-webkit-text-stroke:0.35px #F5F5F5;transform:scaleY(1.08);transform-origin:0 18.38px;">EdgeStartTimestamp</div>
<div class="t" style="left:1425.00px;top:568.62px;font-size:24px;line-height:24px;color:#F5F5F5;font-weight:400;font-family:'Liberation Mono', monospace;-webkit-text-stroke:0.35px #F5F5F5;transform:scaleY(1.08);transform-origin:0 18.38px;">ClientRequestMethod</div>
<div class="t" style="left:1745.00px;top:568.62px;font-size:24px;line-height:24px;color:#F5F5F5;font-weight:400;font-family:'Liberation Mono', monospace;-webkit-text-stroke:0.35px #F5F5F5;transform:scaleY(1.08);transform-origin:0 18.38px;">ClientRequestURI</div>
<div class="t" style="left:2065.00px;top:568.62px;font-size:24px;line-height:24px;color:#F5F5F5;font-weight:400;font-family:'Liberation Mono', monospace;-webkit-text-stroke:0.35px #F5F5F5;transform:scaleY(1.08);transform-origin:0 18.38px;">EdgeResponseStatus</div>
<div class="t" style="left:2385.00px;top:568.62px;font-size:24px;line-height:24px;color:#F5F5F5;font-weight:400;font-family:'Liberation Mono', monospace;-webkit-text-stroke:0.35px #F5F5F5;transform:scaleY(1.08);transform-origin:0 18.38px;">ClientCountry</div>
<div class="t" style="left:1106.50px;top:618.52px;font-size:24px;line-height:24px;color:#E2E2E2;font-weight:400;font-family:'Liberation Mono', monospace;-webkit-text-stroke:0.35px #E2E2E2;transform:scaleY(1.08);transform-origin:0 18.38px;">1771977562054696960</div>
<div class="t" style="left:1426.50px;top:618.52px;font-size:24px;line-height:24px;color:#E2E2E2;font-weight:400;font-family:'Liberation Mono', monospace;-webkit-text-stroke:0.35px #E2E2E2;transform:scaleY(1.08);transform-origin:0 18.38px;">DELETE</div>
<div class="t" style="left:1746.50px;top:618.52px;font-size:24px;line-height:24px;color:#E2E2E2;font-weight:400;font-family:'Liberation Mono', monospace;-webkit-text-stroke:0.35px #E2E2E2;transform:scaleY(1.08);transform-origin:0 18.38px;">/assets/main.js</div>
<div class="t" style="left:2066.50px;top:618.52px;font-size:24px;line-height:24px;color:#E2E2E2;font-weight:400;font-family:'Liberation Mono', monospace;-webkit-text-stroke:0.35px #E2E2E2;transform:scaleY(1.08);transform-origin:0 18.38px;">200</div>
<div class="t" style="left:2386.50px;top:618.52px;font-size:24px;line-height:24px;color:#E2E2E2;font-weight:400;font-family:'Liberation Mono', monospace;-webkit-text-stroke:0.35px #E2E2E2;transform:scaleY(1.08);transform-origin:0 18.38px;">US</div>
<div class="t" style="left:1106.50px;top:663.70px;font-size:24px;line-height:24px;color:#E2E2E2;font-weight:400;font-family:'Liberation Mono', monospace;-webkit-text-stroke:0.35px #E2E2E2;transform:scaleY(1.08);transform-origin:0 18.38px;">1771977549717662976</div>
<div class="t" style="left:1426.50px;top:663.70px;font-size:24px;line-height:24px;color:#E2E2E2;font-weight:400;font-family:'Liberation Mono', monospace;-webkit-text-stroke:0.35px #E2E2E2;transform:scaleY(1.08);transform-origin:0 18.38px;">GET</div>
<div class="t" style="left:1746.50px;top:663.70px;font-size:24px;line-height:24px;color:#E2E2E2;font-weight:400;font-family:'Liberation Mono', monospace;-webkit-text-stroke:0.35px #E2E2E2;transform:scaleY(1.08);transform-origin:0 18.38px;">/assets/main.js</div>
<div class="t" style="left:2066.50px;top:663.70px;font-size:24px;line-height:24px;color:#E2E2E2;font-weight:400;font-family:'Liberation Mono', monospace;-webkit-text-stroke:0.35px #E2E2E2;transform:scaleY(1.08);transform-origin:0 18.38px;">404</div>
<div class="t" style="left:2386.50px;top:663.70px;font-size:24px;line-height:24px;color:#E2E2E2;font-weight:400;font-family:'Liberation Mono', monospace;-webkit-text-stroke:0.35px #E2E2E2;transform:scaleY(1.08);transform-origin:0 18.38px;">DE</div>
<div class="t" style="left:1106.50px;top:708.88px;font-size:24px;line-height:24px;color:#E2E2E2;font-weight:400;font-family:'Liberation Mono', monospace;-webkit-text-stroke:0.35px #E2E2E2;transform:scaleY(1.08);transform-origin:0 18.38px;">1771977540501293056</div>
<div class="t" style="left:1426.50px;top:708.88px;font-size:24px;line-height:24px;color:#E2E2E2;font-weight:400;font-family:'Liberation Mono', monospace;-webkit-text-stroke:0.35px #E2E2E2;transform:scaleY(1.08);transform-origin:0 18.38px;">GET</div>
<div class="t" style="left:1746.50px;top:708.88px;font-size:24px;line-height:24px;color:#E2E2E2;font-weight:400;font-family:'Liberation Mono', monospace;-webkit-text-stroke:0.35px #E2E2E2;transform:scaleY(1.08);transform-origin:0 18.38px;">/assets/styles.css</div>
<div class="t" style="left:2066.50px;top:708.88px;font-size:24px;line-height:24px;color:#E2E2E2;font-weight:400;font-family:'Liberation Mono', monospace;-webkit-text-stroke:0.35px #E2E2E2;transform:scaleY(1.08);transform-origin:0 18.38px;">200</div>
<div class="t" style="left:2386.50px;top:708.88px;font-size:24px;line-height:24px;color:#E2E2E2;font-weight:400;font-family:'Liberation Mono', monospace;-webkit-text-stroke:0.35px #E2E2E2;transform:scaleY(1.08);transform-origin:0 18.38px;">AU</div>
<div class="t" style="left:1106.50px;top:754.06px;font-size:24px;line-height:24px;color:#E2E2E2;font-weight:400;font-family:'Liberation Mono', monospace;-webkit-text-stroke:0.35px #E2E2E2;transform:scaleY(1.08);transform-origin:0 18.38px;">1771977513675145984</div>
<div class="t" style="left:1426.50px;top:754.06px;font-size:24px;line-height:24px;color:#E2E2E2;font-weight:400;font-family:'Liberation Mono', monospace;-webkit-text-stroke:0.35px #E2E2E2;transform:scaleY(1.08);transform-origin:0 18.38px;">GET</div>
<div class="t" style="left:1746.50px;top:754.06px;font-size:24px;line-height:24px;color:#E2E2E2;font-weight:400;font-family:'Liberation Mono', monospace;-webkit-text-stroke:0.35px #E2E2E2;transform:scaleY(1.08);transform-origin:0 18.38px;">/api/v1/search</div>
<div class="t" style="left:2066.50px;top:754.06px;font-size:24px;line-height:24px;color:#E2E2E2;font-weight:400;font-family:'Liberation Mono', monospace;-webkit-text-stroke:0.35px #E2E2E2;transform:scaleY(1.08);transform-origin:0 18.38px;">200</div>
<div class="t" style="left:2386.50px;top:754.06px;font-size:24px;line-height:24px;color:#E2E2E2;font-weight:400;font-family:'Liberation Mono', monospace;-webkit-text-stroke:0.35px #E2E2E2;transform:scaleY(1.08);transform-origin:0 18.38px;">MX</div>
<div class="t" style="left:1106.50px;top:799.24px;font-size:24px;line-height:24px;color:#E2E2E2;font-weight:400;font-family:'Liberation Mono', monospace;-webkit-text-stroke:0.35px #E2E2E2;transform:scaleY(1.08);transform-origin:0 18.38px;">1771977512627859200</div>
<div class="t" style="left:1426.50px;top:799.24px;font-size:24px;line-height:24px;color:#E2E2E2;font-weight:400;font-family:'Liberation Mono', monospace;-webkit-text-stroke:0.35px #E2E2E2;transform:scaleY(1.08);transform-origin:0 18.38px;">GET</div>
<div class="t" style="left:1746.50px;top:799.24px;font-size:24px;line-height:24px;color:#E2E2E2;font-weight:400;font-family:'Liberation Mono', monospace;-webkit-text-stroke:0.35px #E2E2E2;transform:scaleY(1.08);transform-origin:0 18.38px;">/api/v1/orders</div>
<div class="t" style="left:2066.50px;top:799.24px;font-size:24px;line-height:24px;color:#E2E2E2;font-weight:400;font-family:'Liberation Mono', monospace;-webkit-text-stroke:0.35px #E2E2E2;transform:scaleY(1.08);transform-origin:0 18.38px;">200</div>
<div class="t" style="left:2386.50px;top:799.24px;font-size:24px;line-height:24px;color:#E2E2E2;font-weight:400;font-family:'Liberation Mono', monospace;-webkit-text-stroke:0.35px #E2E2E2;transform:scaleY(1.08);transform-origin:0 18.38px;">AU</div>
<div class="t" style="left:1106.50px;top:844.42px;font-size:24px;line-height:24px;color:#E2E2E2;font-weight:400;font-family:'Liberation Mono', monospace;-webkit-text-stroke:0.35px #E2E2E2;transform:scaleY(1.08);transform-origin:0 18.38px;">1771977501019442944</div>
<div class="t" style="left:1426.50px;top:844.42px;font-size:24px;line-height:24px;color:#E2E2E2;font-weight:400;font-family:'Liberation Mono', monospace;-webkit-text-stroke:0.35px #E2E2E2;transform:scaleY(1.08);transform-origin:0 18.38px;">GET</div>
<div class="t" style="left:1746.50px;top:844.42px;font-size:24px;line-height:24px;color:#E2E2E2;font-weight:400;font-family:'Liberation Mono', monospace;-webkit-text-stroke:0.35px #E2E2E2;transform:scaleY(1.08);transform-origin:0 18.38px;">/images/hero.webp</div>
<div class="t" style="left:2066.50px;top:844.42px;font-size:24px;line-height:24px;color:#E2E2E2;font-weight:400;font-family:'Liberation Mono', monospace;-webkit-text-stroke:0.35px #E2E2E2;transform:scaleY(1.08);transform-origin:0 18.38px;">200</div>
<div class="t" style="left:2386.50px;top:844.42px;font-size:24px;line-height:24px;color:#E2E2E2;font-weight:400;font-family:'Liberation Mono', monospace;-webkit-text-stroke:0.35px #E2E2E2;transform:scaleY(1.08);transform-origin:0 18.38px;">FR</div>
<div class="t" style="left:1106.50px;top:889.60px;font-size:24px;line-height:24px;color:#E2E2E2;font-weight:400;font-family:'Liberation Mono', monospace;-webkit-text-stroke:0.35px #E2E2E2;transform:scaleY(1.08);transform-origin:0 18.38px;">1771977496047072768</div>
<div class="t" style="left:1426.50px;top:889.60px;font-size:24px;line-height:24px;color:#E2E2E2;font-weight:400;font-family:'Liberation Mono', monospace;-webkit-text-stroke:0.35px #E2E2E2;transform:scaleY(1.08);transform-origin:0 18.38px;">GET</div>
<div class="t" style="left:1746.50px;top:889.60px;font-size:24px;line-height:24px;color:#E2E2E2;font-weight:400;font-family:'Liberation Mono', monospace;-webkit-text-stroke:0.35px #E2E2E2;transform:scaleY(1.08);transform-origin:0 18.38px;">/images/products/2.j&#8230;</div>
<div class="t" style="left:2066.50px;top:889.60px;font-size:24px;line-height:24px;color:#E2E2E2;font-weight:400;font-family:'Liberation Mono', monospace;-webkit-text-stroke:0.35px #E2E2E2;transform:scaleY(1.08);transform-origin:0 18.38px;">200</div>
<div class="t" style="left:2386.50px;top:889.60px;font-size:24px;line-height:24px;color:#E2E2E2;font-weight:400;font-family:'Liberation Mono', monospace;-webkit-text-stroke:0.35px #E2E2E2;transform:scaleY(1.08);transform-origin:0 18.38px;">CA</div>
<div class="t" style="left:1106.50px;top:934.78px;font-size:24px;line-height:24px;color:#E2E2E2;font-weight:400;font-family:'Liberation Mono', monospace;-webkit-text-stroke:0.35px #E2E2E2;transform:scaleY(1.08);transform-origin:0 18.38px;">1771977495137478144</div>
<div class="t" style="left:1426.50px;top:934.78px;font-size:24px;line-height:24px;color:#E2E2E2;font-weight:400;font-family:'Liberation Mono', monospace;-webkit-text-stroke:0.35px #E2E2E2;transform:scaleY(1.08);transform-origin:0 18.38px;">POST</div>
<div class="t" style="left:1746.50px;top:934.78px;font-size:24px;line-height:24px;color:#E2E2E2;font-weight:400;font-family:'Liberation Mono', monospace;-webkit-text-stroke:0.35px #E2E2E2;transform:scaleY(1.08);transform-origin:0 18.38px;">/docs/api-reference</div>
<div class="t" style="left:2066.50px;top:934.78px;font-size:24px;line-height:24px;color:#E2E2E2;font-weight:400;font-family:'Liberation Mono', monospace;-webkit-text-stroke:0.35px #E2E2E2;transform:scaleY(1.08);transform-origin:0 18.38px;">200</div>
<div class="t" style="left:2386.50px;top:934.78px;font-size:24px;line-height:24px;color:#E2E2E2;font-weight:400;font-family:'Liberation Mono', monospace;-webkit-text-stroke:0.35px #E2E2E2;transform:scaleY(1.08);transform-origin:0 18.38px;">DE</div>
<div class="t" style="left:1106.50px;top:979.96px;font-size:24px;line-height:24px;color:#E2E2E2;font-weight:400;font-family:'Liberation Mono', monospace;-webkit-text-stroke:0.35px #E2E2E2;transform:scaleY(1.08);transform-origin:0 18.38px;">1771977490563613952</div>
<div class="t" style="left:1426.50px;top:979.96px;font-size:24px;line-height:24px;color:#E2E2E2;font-weight:400;font-family:'Liberation Mono', monospace;-webkit-text-stroke:0.35px #E2E2E2;transform:scaleY(1.08);transform-origin:0 18.38px;">GET</div>
<div class="t" style="left:1746.50px;top:979.96px;font-size:24px;line-height:24px;color:#E2E2E2;font-weight:400;font-family:'Liberation Mono', monospace;-webkit-text-stroke:0.35px #E2E2E2;transform:scaleY(1.08);transform-origin:0 18.38px;">/api/v1/orders</div>
<div class="t" style="left:2066.50px;top:979.96px;font-size:24px;line-height:24px;color:#E2E2E2;font-weight:400;font-family:'Liberation Mono', monospace;-webkit-text-stroke:0.35px #E2E2E2;transform:scaleY(1.08);transform-origin:0 18.38px;">200</div>
<div class="t" style="left:2386.50px;top:979.96px;font-size:24px;line-height:24px;color:#E2E2E2;font-weight:400;font-family:'Liberation Mono', monospace;-webkit-text-stroke:0.35px #E2E2E2;transform:scaleY(1.08);transform-origin:0 18.38px;">MX</div>
<div class="t" style="left:1106.50px;top:1025.14px;font-size:24px;line-height:24px;color:#E2E2E2;font-weight:400;font-family:'Liberation Mono', monospace;-webkit-text-stroke:0.35px #E2E2E2;transform:scaleY(1.08);transform-origin:0 18.38px;">1771977479754461952</div>
<div class="t" style="left:1426.50px;top:1025.14px;font-size:24px;line-height:24px;color:#E2E2E2;font-weight:400;font-family:'Liberation Mono', monospace;-webkit-text-stroke:0.35px #E2E2E2;transform:scaleY(1.08);transform-origin:0 18.38px;">GET</div>
<div class="t" style="left:1746.50px;top:1025.14px;font-size:24px;line-height:24px;color:#E2E2E2;font-weight:400;font-family:'Liberation Mono', monospace;-webkit-text-stroke:0.35px #E2E2E2;transform:scaleY(1.08);transform-origin:0 18.38px;">/api/v1/orders</div>
<div class="t" style="left:2066.50px;top:1025.14px;font-size:24px;line-height:24px;color:#E2E2E2;font-weight:400;font-family:'Liberation Mono', monospace;-webkit-text-stroke:0.35px #E2E2E2;transform:scaleY(1.08);transform-origin:0 18.38px;">200</div>
<div class="t" style="left:2386.50px;top:1025.14px;font-size:24px;line-height:24px;color:#E2E2E2;font-weight:400;font-family:'Liberation Mono', monospace;-webkit-text-stroke:0.35px #E2E2E2;transform:scaleY(1.08);transform-origin:0 18.38px;">GB</div>
<div class="t" style="left:1106.50px;top:1070.32px;font-size:24px;line-height:24px;color:#E2E2E2;font-weight:400;font-family:'Liberation Mono', monospace;-webkit-text-stroke:0.35px #E2E2E2;transform:scaleY(1.08);transform-origin:0 18.38px;">1771977447543742976</div>
<div class="t" style="left:1426.50px;top:1070.32px;font-size:24px;line-height:24px;color:#E2E2E2;font-weight:400;font-family:'Liberation Mono', monospace;-webkit-text-stroke:0.35px #E2E2E2;transform:scaleY(1.08);transform-origin:0 18.38px;">GET</div>
<div class="t" style="left:1746.50px;top:1070.32px;font-size:24px;line-height:24px;color:#E2E2E2;font-weight:400;font-family:'Liberation Mono', monospace;-webkit-text-stroke:0.35px #E2E2E2;transform:scaleY(1.08);transform-origin:0 18.38px;">/api/v1/auth/login</div>
<div class="t" style="left:2066.50px;top:1070.32px;font-size:24px;line-height:24px;color:#E2E2E2;font-weight:400;font-family:'Liberation Mono', monospace;-webkit-text-stroke:0.35px #E2E2E2;transform:scaleY(1.08);transform-origin:0 18.38px;">200</div>
<div class="t" style="left:2386.50px;top:1070.32px;font-size:24px;line-height:24px;color:#E2E2E2;font-weight:400;font-family:'Liberation Mono', monospace;-webkit-text-stroke:0.35px #E2E2E2;transform:scaleY(1.08);transform-origin:0 18.38px;">US</div>
<div class="t" style="left:1106.50px;top:1115.50px;font-size:24px;line-height:24px;color:#E2E2E2;font-weight:400;font-family:'Liberation Mono', monospace;-webkit-text-stroke:0.35px #E2E2E2;transform:scaleY(1.08);transform-origin:0 18.38px;">1771977444703206912</div>
<div class="t" style="left:1426.50px;top:1115.50px;font-size:24px;line-height:24px;color:#E2E2E2;font-weight:400;font-family:'Liberation Mono', monospace;-webkit-text-stroke:0.35px #E2E2E2;transform:scaleY(1.08);transform-origin:0 18.38px;">GET</div>
<div class="t" style="left:1746.50px;top:1115.50px;font-size:24px;line-height:24px;color:#E2E2E2;font-weight:400;font-family:'Liberation Mono', monospace;-webkit-text-stroke:0.35px #E2E2E2;transform:scaleY(1.08);transform-origin:0 18.38px;">/api/v1/notifications</div>
<div class="t" style="left:2066.50px;top:1115.50px;font-size:24px;line-height:24px;color:#E2E2E2;font-weight:400;font-family:'Liberation Mono', monospace;-webkit-text-stroke:0.35px #E2E2E2;transform:scaleY(1.08);transform-origin:0 18.38px;">502</div>
<div class="t" style="left:2386.50px;top:1115.50px;font-size:24px;line-height:24px;color:#E2E2E2;font-weight:400;font-family:'Liberation Mono', monospace;-webkit-text-stroke:0.35px #E2E2E2;transform:scaleY(1.08);transform-origin:0 18.38px;">GB</div>
<div class="t" style="left:1106.50px;top:1160.68px;font-size:24px;line-height:24px;color:#E2E2E2;font-weight:400;font-family:'Liberation Mono', monospace;-webkit-text-stroke:0.35px #E2E2E2;transform:scaleY(1.08);transform-origin:0 18.38px;">1771977430320741888</div>
<div class="t" style="left:1426.50px;top:1160.68px;font-size:24px;line-height:24px;color:#E2E2E2;font-weight:400;font-family:'Liberation Mono', monospace;-webkit-text-stroke:0.35px #E2E2E2;transform:scaleY(1.08);transform-origin:0 18.38px;">GET</div>
<div class="t" style="left:1746.50px;top:1160.68px;font-size:24px;line-height:24px;color:#E2E2E2;font-weight:400;font-family:'Liberation Mono', monospace;-webkit-text-stroke:0.35px #E2E2E2;transform:scaleY(1.08);transform-origin:0 18.38px;">/api/v1/products</div>
<div class="t" style="left:2066.50px;top:1160.68px;font-size:24px;line-height:24px;color:#E2E2E2;font-weight:400;font-family:'Liberation Mono', monospace;-webkit-text-stroke:0.35px #E2E2E2;transform:scaleY(1.08);transform-origin:0 18.38px;">201</div>
<div class="t" style="left:2386.50px;top:1160.68px;font-size:24px;line-height:24px;color:#E2E2E2;font-weight:400;font-family:'Liberation Mono', monospace;-webkit-text-stroke:0.35px #E2E2E2;transform:scaleY(1.08);transform-origin:0 18.38px;">DE</div>
<div class="t" style="left:1106.50px;top:1205.86px;font-size:24px;line-height:24px;color:#E2E2E2;font-weight:400;font-family:'Liberation Mono', monospace;-webkit-text-stroke:0.35px #E2E2E2;transform:scaleY(1.08);transform-origin:0 18.38px;">1771977429451649792</div>
<div class="t" style="left:1426.50px;top:1205.86px;font-size:24px;line-height:24px;color:#E2E2E2;font-weight:400;font-family:'Liberation Mono', monospace;-webkit-text-stroke:0.35px #E2E2E2;transform:scaleY(1.08);transform-origin:0 18.38px;">GET</div>
<div class="t" style="left:1746.50px;top:1205.86px;font-size:24px;line-height:24px;color:#E2E2E2;font-weight:400;font-family:'Liberation Mono', monospace;-webkit-text-stroke:0.35px #E2E2E2;transform:scaleY(1.08);transform-origin:0 18.38px;">/assets/main.js</div>
<div class="t" style="left:2066.50px;top:1205.86px;font-size:24px;line-height:24px;color:#E2E2E2;font-weight:400;font-family:'Liberation Mono', monospace;-webkit-text-stroke:0.35px #E2E2E2;transform:scaleY(1.08);transform-origin:0 18.38px;">200</div>
<div class="t" style="left:2386.50px;top:1205.86px;font-size:24px;line-height:24px;color:#E2E2E2;font-weight:400;font-family:'Liberation Mono', monospace;-webkit-text-stroke:0.35px #E2E2E2;transform:scaleY(1.08);transform-origin:0 18.38px;">AU</div>
<div class="t" style="left:1106.50px;top:1251.04px;font-size:24px;line-height:24px;color:#E2E2E2;font-weight:400;font-family:'Liberation Mono', monospace;-webkit-text-stroke:0.35px #E2E2E2;transform:scaleY(1.08);transform-origin:0 18.38px;">1771977381128724224</div>
<div class="t" style="left:1426.50px;top:1251.04px;font-size:24px;line-height:24px;color:#E2E2E2;font-weight:400;font-family:'Liberation Mono', monospace;-webkit-text-stroke:0.35px #E2E2E2;transform:scaleY(1.08);transform-origin:0 18.38px;">PUT</div>
<div class="t" style="left:1746.50px;top:1251.04px;font-size:24px;line-height:24px;color:#E2E2E2;font-weight:400;font-family:'Liberation Mono', monospace;-webkit-text-stroke:0.35px #E2E2E2;transform:scaleY(1.08);transform-origin:0 18.38px;">/assets/main.js</div>
<div class="t" style="left:2066.50px;top:1251.04px;font-size:24px;line-height:24px;color:#E2E2E2;font-weight:400;font-family:'Liberation Mono', monospace;-webkit-text-stroke:0.35px #E2E2E2;transform:scaleY(1.08);transform-origin:0 18.38px;">200</div>
<div class="t" style="left:2386.50px;top:1251.04px;font-size:24px;line-height:24px;color:#E2E2E2;font-weight:400;font-family:'Liberation Mono', monospace;-webkit-text-stroke:0.35px #E2E2E2;transform:scaleY(1.08);transform-origin:0 18.38px;">CA</div>
<div class="t" style="left:1106.50px;top:1296.22px;font-size:24px;line-height:24px;color:#E2E2E2;font-weight:400;font-family:'Liberation Mono', monospace;-webkit-text-stroke:0.35px #E2E2E2;transform:scaleY(1.08);transform-origin:0 18.38px;">1771977372136857088</div>
<div class="t" style="left:1426.50px;top:1296.22px;font-size:24px;line-height:24px;color:#E2E2E2;font-weight:400;font-family:'Liberation Mono', monospace;-webkit-text-stroke:0.35px #E2E2E2;transform:scaleY(1.08);transform-origin:0 18.38px;">GET</div>
<div class="t" style="left:1746.50px;top:1296.22px;font-size:24px;line-height:24px;color:#E2E2E2;font-weight:400;font-family:'Liberation Mono', monospace;-webkit-text-stroke:0.35px #E2E2E2;transform:scaleY(1.08);transform-origin:0 18.38px;">/robots.txt</div>
<div class="t" style="left:2066.50px;top:1296.22px;font-size:24px;line-height:24px;color:#E2E2E2;font-weight:400;font-family:'Liberation Mono', monospace;-webkit-text-stroke:0.35px #E2E2E2;transform:scaleY(1.08);transform-origin:0 18.38px;">200</div>
<div class="t" style="left:2386.50px;top:1296.22px;font-size:24px;line-height:24px;color:#E2E2E2;font-weight:400;font-family:'Liberation Mono', monospace;-webkit-text-stroke:0.35px #E2E2E2;transform:scaleY(1.08);transform-origin:0 18.38px;">US</div>
<div class="t" style="left:1106.50px;top:1341.40px;font-size:24px;line-height:24px;color:#E2E2E2;font-weight:400;font-family:'Liberation Mono', monospace;-webkit-text-stroke:0.35px #E2E2E2;transform:scaleY(1.08);transform-origin:0 18.38px;">1771977364549739008</div>
<div class="t" style="left:1426.50px;top:1341.40px;font-size:24px;line-height:24px;color:#E2E2E2;font-weight:400;font-family:'Liberation Mono', monospace;-webkit-text-stroke:0.35px #E2E2E2;transform:scaleY(1.08);transform-origin:0 18.38px;">GET</div>
<div class="t" style="left:1746.50px;top:1341.40px;font-size:24px;line-height:24px;color:#E2E2E2;font-weight:400;font-family:'Liberation Mono', monospace;-webkit-text-stroke:0.35px #E2E2E2;transform:scaleY(1.08);transform-origin:0 18.38px;">/api/v1/users</div>
<div class="t" style="left:2066.50px;top:1341.40px;font-size:24px;line-height:24px;color:#E2E2E2;font-weight:400;font-family:'Liberation Mono', monospace;-webkit-text-stroke:0.35px #E2E2E2;transform:scaleY(1.08);transform-origin:0 18.38px;">404</div>
<div class="t" style="left:2386.50px;top:1341.40px;font-size:24px;line-height:24px;color:#E2E2E2;font-weight:400;font-family:'Liberation Mono', monospace;-webkit-text-stroke:0.35px #E2E2E2;transform:scaleY(1.08);transform-origin:0 18.38px;">US</div>
<div class="t" style="left:1106.50px;top:1386.58px;font-size:24px;line-height:24px;color:#E2E2E2;font-weight:400;font-family:'Liberation Mono', monospace;-webkit-text-stroke:0.35px #E2E2E2;transform:scaleY(1.08);transform-origin:0 18.38px;">1771977311634380032</div>
<div class="t" style="left:1426.50px;top:1386.58px;font-size:24px;line-height:24px;color:#E2E2E2;font-weight:400;font-family:'Liberation Mono', monospace;-webkit-text-stroke:0.35px #E2E2E2;transform:scaleY(1.08);transform-origin:0 18.38px;">GET</div>
<div class="t" style="left:1746.50px;top:1386.58px;font-size:24px;line-height:24px;color:#E2E2E2;font-weight:400;font-family:'Liberation Mono', monospace;-webkit-text-stroke:0.35px #E2E2E2;transform:scaleY(1.08);transform-origin:0 18.38px;">/assets/logo.png</div>
<div class="t" style="left:2066.50px;top:1386.58px;font-size:24px;line-height:24px;color:#E2E2E2;font-weight:400;font-family:'Liberation Mono', monospace;-webkit-text-stroke:0.35px #E2E2E2;transform:scaleY(1.08);transform-origin:0 18.38px;">200</div>
<div class="t" style="left:2386.50px;top:1386.58px;font-size:24px;line-height:24px;color:#E2E2E2;font-weight:400;font-family:'Liberation Mono', monospace;-webkit-text-stroke:0.35px #E2E2E2;transform:scaleY(1.08);transform-origin:0 18.38px;">US</div>
<div class="t" style="left:1106.50px;top:1431.76px;font-size:24px;line-height:24px;color:#E2E2E2;font-weight:400;font-family:'Liberation Mono', monospace;-webkit-text-stroke:0.35px #E2E2E2;transform:scaleY(1.08);transform-origin:0 18.38px;">1771977294632285184</div>
<div class="t" style="left:1426.50px;top:1431.76px;font-size:24px;line-height:24px;color:#E2E2E2;font-weight:400;font-family:'Liberation Mono', monospace;-webkit-text-stroke:0.35px #E2E2E2;transform:scaleY(1.08);transform-origin:0 18.38px;">GET</div>
<div class="t" style="left:1746.50px;top:1431.76px;font-size:24px;line-height:24px;color:#E2E2E2;font-weight:400;font-family:'Liberation Mono', monospace;-webkit-text-stroke:0.35px #E2E2E2;transform:scaleY(1.08);transform-origin:0 18.38px;">/api/v1/search</div>
<div class="t" style="left:2066.50px;top:1431.76px;font-size:24px;line-height:24px;color:#E2E2E2;font-weight:400;font-family:'Liberation Mono', monospace;-webkit-text-stroke:0.35px #E2E2E2;transform:scaleY(1.08);transform-origin:0 18.38px;">200</div>
<div class="t" style="left:2386.50px;top:1431.76px;font-size:24px;line-height:24px;color:#E2E2E2;font-weight:400;font-family:'Liberation Mono', monospace;-webkit-text-stroke:0.35px #E2E2E2;transform:scaleY(1.08);transform-origin:0 18.38px;">US</div>
<div class="t" style="left:1106.50px;top:1476.94px;font-size:24px;line-height:24px;color:#E2E2E2;font-weight:400;font-family:'Liberation Mono', monospace;-webkit-text-stroke:0.35px #E2E2E2;transform:scaleY(1.08);transform-origin:0 18.38px;">1771977276623097856</div>
<div class="t" style="left:1426.50px;top:1476.94px;font-size:24px;line-height:24px;color:#E2E2E2;font-weight:400;font-family:'Liberation Mono', monospace;-webkit-text-stroke:0.35px #E2E2E2;transform:scaleY(1.08);transform-origin:0 18.38px;">GET</div>
<div class="t" style="left:1746.50px;top:1476.94px;font-size:24px;line-height:24px;color:#E2E2E2;font-weight:400;font-family:'Liberation Mono', monospace;-webkit-text-stroke:0.35px #E2E2E2;transform:scaleY(1.08);transform-origin:0 18.38px;">/images/products/1.j&#8230;</div>
<div class="t" style="left:2066.50px;top:1476.94px;font-size:24px;line-height:24px;color:#E2E2E2;font-weight:400;font-family:'Liberation Mono', monospace;-webkit-text-stroke:0.35px #E2E2E2;transform:scaleY(1.08);transform-origin:0 18.38px;">200</div>
<div class="t" style="left:2386.50px;top:1476.94px;font-size:24px;line-height:24px;color:#E2E2E2;font-weight:400;font-family:'Liberation Mono', monospace;-webkit-text-stroke:0.35px #E2E2E2;transform:scaleY(1.08);transform-origin:0 18.38px;">GB</div>
<div class="t" style="left:1106.50px;top:1522.12px;font-size:24px;line-height:24px;color:#E2E2E2;font-weight:400;font-family:'Liberation Mono', monospace;-webkit-text-stroke:0.35px #E2E2E2;transform:scaleY(1.08);transform-origin:0 18.38px;">1771977258347964160</div>
<div class="t" style="left:1426.50px;top:1522.12px;font-size:24px;line-height:24px;color:#E2E2E2;font-weight:400;font-family:'Liberation Mono', monospace;-webkit-text-stroke:0.35px #E2E2E2;transform:scaleY(1.08);transform-origin:0 18.38px;">GET</div>
<div class="t" style="left:1746.50px;top:1522.12px;font-size:24px;line-height:24px;color:#E2E2E2;font-weight:400;font-family:'Liberation Mono', monospace;-webkit-text-stroke:0.35px #E2E2E2;transform:scaleY(1.08);transform-origin:0 18.38px;">/blog/2025/01/releas&#8230;</div>
<div class="t" style="left:2066.50px;top:1522.12px;font-size:24px;line-height:24px;color:#E2E2E2;font-weight:400;font-family:'Liberation Mono', monospace;-webkit-text-stroke:0.35px #E2E2E2;transform:scaleY(1.08);transform-origin:0 18.38px;">200</div>
<div class="t" style="left:2386.50px;top:1522.12px;font-size:24px;line-height:24px;color:#E2E2E2;font-weight:400;font-family:'Liberation Mono', monospace;-webkit-text-stroke:0.35px #E2E2E2;transform:scaleY(1.08);transform-origin:0 18.38px;">JP</div>
<div class="t" style="left:1106.50px;top:1567.30px;font-size:24px;line-height:24px;color:#E2E2E2;font-weight:400;font-family:'Liberation Mono', monospace;-webkit-text-stroke:0.35px #E2E2E2;transform:scaleY(1.08);transform-origin:0 18.38px;">1771977257100864000</div>
<div class="t" style="left:1426.50px;top:1567.30px;font-size:24px;line-height:24px;color:#E2E2E2;font-weight:400;font-family:'Liberation Mono', monospace;-webkit-text-stroke:0.35px #E2E2E2;transform:scaleY(1.08);transform-origin:0 18.38px;">GET</div>
<div class="t" style="left:1746.50px;top:1567.30px;font-size:24px;line-height:24px;color:#E2E2E2;font-weight:400;font-family:'Liberation Mono', monospace;-webkit-text-stroke:0.35px #E2E2E2;transform:scaleY(1.08);transform-origin:0 18.38px;">/api/v1/inventory</div>
<div class="t" style="left:2066.50px;top:1567.30px;font-size:24px;line-height:24px;color:#E2E2E2;font-weight:400;font-family:'Liberation Mono', monospace;-webkit-text-stroke:0.35px #E2E2E2;transform:scaleY(1.08);transform-origin:0 18.38px;">200</div>
<div class="t" style="left:2386.50px;top:1567.30px;font-size:24px;line-height:24px;color:#E2E2E2;font-weight:400;font-family:'Liberation Mono', monospace;-webkit-text-stroke:0.35px #E2E2E2;transform:scaleY(1.08);transform-origin:0 18.38px;">BR</div>
<div class="t" style="left:1106.50px;top:1612.48px;font-size:24px;line-height:24px;color:#E2E2E2;font-weight:400;font-family:'Liberation Mono', monospace;-webkit-text-stroke:0.35px #E2E2E2;transform:scaleY(1.08);transform-origin:0 18.38px;">1771977225553527040</div>
<div class="t" style="left:1426.50px;top:1612.48px;font-size:24px;line-height:24px;color:#E2E2E2;font-weight:400;font-family:'Liberation Mono', monospace;-webkit-text-stroke:0.35px #E2E2E2;transform:scaleY(1.08);transform-origin:0 18.38px;">GET</div>
<div class="t" style="left:1746.50px;top:1612.48px;font-size:24px;line-height:24px;color:#E2E2E2;font-weight:400;font-family:'Liberation Mono', monospace;-webkit-text-stroke:0.35px #E2E2E2;transform:scaleY(1.08);transform-origin:0 18.38px;">/api/v1/search</div>
<div class="t" style="left:2066.50px;top:1612.48px;font-size:24px;line-height:24px;color:#E2E2E2;font-weight:400;font-family:'Liberation Mono', monospace;-webkit-text-stroke:0.35px #E2E2E2;transform:scaleY(1.08);transform-origin:0 18.38px;">200</div>
<div class="t" style="left:2386.50px;top:1612.48px;font-size:24px;line-height:24px;color:#E2E2E2;font-weight:400;font-family:'Liberation Mono', monospace;-webkit-text-stroke:0.35px #E2E2E2;transform:scaleY(1.08);transform-origin:0 18.38px;">CA</div>
<div class="t" style="left:1106.50px;top:1657.66px;font-size:24px;line-height:24px;color:#E2E2E2;font-weight:400;font-family:'Liberation Mono', monospace;-webkit-text-stroke:0.35px #E2E2E2;transform:scaleY(1.08);transform-origin:0 18.38px;">1771977220512903936</div>
<div class="t" style="left:1426.50px;top:1657.66px;font-size:24px;line-height:24px;color:#E2E2E2;font-weight:400;font-family:'Liberation Mono', monospace;-webkit-text-stroke:0.35px #E2E2E2;transform:scaleY(1.08);transform-origin:0 18.38px;">GET</div>
<div class="t" style="left:1746.50px;top:1657.66px;font-size:24px;line-height:24px;color:#E2E2E2;font-weight:400;font-family:'Liberation Mono', monospace;-webkit-text-stroke:0.35px #E2E2E2;transform:scaleY(1.08);transform-origin:0 18.38px;">/sitemap.xml</div>
<div class="t" style="left:2066.50px;top:1657.66px;font-size:24px;line-height:24px;color:#E2E2E2;font-weight:400;font-family:'Liberation Mono', monospace;-webkit-text-stroke:0.35px #E2E2E2;transform:scaleY(1.08);transform-origin:0 18.38px;">200</div>
<div class="t" style="left:2386.50px;top:1657.66px;font-size:24px;line-height:24px;color:#E2E2E2;font-weight:400;font-family:'Liberation Mono', monospace;-webkit-text-stroke:0.35px #E2E2E2;transform:scaleY(1.08);transform-origin:0 18.38px;">US</div>
<div class="t" style="left:1106.50px;top:1702.84px;font-size:24px;line-height:24px;color:#E2E2E2;font-weight:400;font-family:'Liberation Mono', monospace;-webkit-text-stroke:0.35px #E2E2E2;transform:scaleY(1.08);transform-origin:0 18.38px;">1771977170170320896</div>
<div class="t" style="left:1426.50px;top:1702.84px;font-size:24px;line-height:24px;color:#E2E2E2;font-weight:400;font-family:'Liberation Mono', monospace;-webkit-text-stroke:0.35px #E2E2E2;transform:scaleY(1.08);transform-origin:0 18.38px;">POST</div>
<div class="t" style="left:1746.50px;top:1702.84px;font-size:24px;line-height:24px;color:#E2E2E2;font-weight:400;font-family:'Liberation Mono', monospace;-webkit-text-stroke:0.35px #E2E2E2;transform:scaleY(1.08);transform-origin:0 18.38px;">/api/v1/products</div>
<div class="t" style="left:2066.50px;top:1702.84px;font-size:24px;line-height:24px;color:#E2E2E2;font-weight:400;font-family:'Liberation Mono', monospace;-webkit-text-stroke:0.35px #E2E2E2;transform:scaleY(1.08);transform-origin:0 18.38px;">200</div>
<div class="t" style="left:2386.50px;top:1702.84px;font-size:24px;line-height:24px;color:#E2E2E2;font-weight:400;font-family:'Liberation Mono', monospace;-webkit-text-stroke:0.35px #E2E2E2;transform:scaleY(1.08);transform-origin:0 18.38px;">US</div>
<div class="t" style="left:1106.50px;top:1748.02px;font-size:24px;line-height:24px;color:#E2E2E2;font-weight:400;font-family:'Liberation Mono', monospace;-webkit-text-stroke:0.35px #E2E2E2;transform:scaleY(1.08);transform-origin:0 18.38px;">1771977150952462080</div>
<div class="t" style="left:1426.50px;top:1748.02px;font-size:24px;line-height:24px;color:#E2E2E2;font-weight:400;font-family:'Liberation Mono', monospace;-webkit-text-stroke:0.35px #E2E2E2;transform:scaleY(1.08);transform-origin:0 18.38px;">GET</div>
<div class="t" style="left:1746.50px;top:1748.02px;font-size:24px;line-height:24px;color:#E2E2E2;font-weight:400;font-family:'Liberation Mono', monospace;-webkit-text-stroke:0.35px #E2E2E2;transform:scaleY(1.08);transform-origin:0 18.38px;">/assets/styles.css</div>
<div class="t" style="left:2066.50px;top:1748.02px;font-size:24px;line-height:24px;color:#E2E2E2;font-weight:400;font-family:'Liberation Mono', monospace;-webkit-text-stroke:0.35px #E2E2E2;transform:scaleY(1.08);transform-origin:0 18.38px;">200</div>
<div class="t" style="left:2386.50px;top:1748.02px;font-size:24px;line-height:24px;color:#E2E2E2;font-weight:400;font-family:'Liberation Mono', monospace;-webkit-text-stroke:0.35px #E2E2E2;transform:scaleY(1.08);transform-origin:0 18.38px;">GB</div>
<div class="t" style="left:1106.50px;top:1793.20px;font-size:24px;line-height:24px;color:#E2E2E2;font-weight:400;font-family:'Liberation Mono', monospace;-webkit-text-stroke:0.35px #E2E2E2;transform:scaleY(1.08);transform-origin:0 18.38px;">1771977146659959040</div>
<div class="t" style="left:1426.50px;top:1793.20px;font-size:24px;line-height:24px;color:#E2E2E2;font-weight:400;font-family:'Liberation Mono', monospace;-webkit-text-stroke:0.35px #E2E2E2;transform:scaleY(1.08);transform-origin:0 18.38px;">GET</div>
<div class="t" style="left:1746.50px;top:1793.20px;font-size:24px;line-height:24px;color:#E2E2E2;font-weight:400;font-family:'Liberation Mono', monospace;-webkit-text-stroke:0.35px #E2E2E2;transform:scaleY(1.08);transform-origin:0 18.38px;">/assets/main.js</div>
<div class="t" style="left:2066.50px;top:1793.20px;font-size:24px;line-height:24px;color:#E2E2E2;font-weight:400;font-family:'Liberation Mono', monospace;-webkit-text-stroke:0.35px #E2E2E2;transform:scaleY(1.08);transform-origin:0 18.38px;">200</div>
<div class="t" style="left:2386.50px;top:1793.20px;font-size:24px;line-height:24px;color:#E2E2E2;font-weight:400;font-family:'Liberation Mono', monospace;-webkit-text-stroke:0.35px #E2E2E2;transform:scaleY(1.08);transform-origin:0 18.38px;">US</div>
<div class="t" style="left:1106.50px;top:1838.38px;font-size:24px;line-height:24px;color:#E2E2E2;font-weight:400;font-family:'Liberation Mono', monospace;-webkit-text-stroke:0.35px #E2E2E2;transform:scaleY(1.08);transform-origin:0 18.38px;">1771977111948904960</div>
<div class="t" style="left:1426.50px;top:1838.38px;font-size:24px;line-height:24px;color:#E2E2E2;font-weight:400;font-family:'Liberation Mono', monospace;-webkit-text-stroke:0.35px #E2E2E2;transform:scaleY(1.08);transform-origin:0 18.38px;">GET</div>
<div class="t" style="left:1746.50px;top:1838.38px;font-size:24px;line-height:24px;color:#E2E2E2;font-weight:400;font-family:'Liberation Mono', monospace;-webkit-text-stroke:0.35px #E2E2E2;transform:scaleY(1.08);transform-origin:0 18.38px;">/images/hero.webp</div>
<div class="t" style="left:2066.50px;top:1838.38px;font-size:24px;line-height:24px;color:#E2E2E2;font-weight:400;font-family:'Liberation Mono', monospace;-webkit-text-stroke:0.35px #E2E2E2;transform:scaleY(1.08);transform-origin:0 18.38px;">200</div>
<div class="t" style="left:2386.50px;top:1838.38px;font-size:24px;line-height:24px;color:#E2E2E2;font-weight:400;font-family:'Liberation Mono', monospace;-webkit-text-stroke:0.35px #E2E2E2;transform:scaleY(1.08);transform-origin:0 18.38px;">US</div>
<div class="t" style="left:1106.50px;top:1883.56px;font-size:24px;line-height:24px;color:#E2E2E2;font-weight:400;font-family:'Liberation Mono', monospace;-webkit-text-stroke:0.35px #E2E2E2;transform:scaleY(1.08);transform-origin:0 18.38px;">1771977109915123968</div>
<div class="t" style="left:1426.50px;top:1883.56px;font-size:24px;line-height:24px;color:#E2E2E2;font-weight:400;font-family:'Liberation Mono', monospace;-webkit-text-stroke:0.35px #E2E2E2;transform:scaleY(1.08);transform-origin:0 18.38px;">GET</div>
<div class="t" style="left:1746.50px;top:1883.56px;font-size:24px;line-height:24px;color:#E2E2E2;font-weight:400;font-family:'Liberation Mono', monospace;-webkit-text-stroke:0.35px #E2E2E2;transform:scaleY(1.08);transform-origin:0 18.38px;">/robots.txt</div>
<div class="t" style="left:2066.50px;top:1883.56px;font-size:24px;line-height:24px;color:#E2E2E2;font-weight:400;font-family:'Liberation Mono', monospace;-webkit-text-stroke:0.35px #E2E2E2;transform:scaleY(1.08);transform-origin:0 18.38px;">200</div>
<div class="t" style="left:2386.50px;top:1883.56px;font-size:24px;line-height:24px;color:#E2E2E2;font-weight:400;font-family:'Liberation Mono', monospace;-webkit-text-stroke:0.35px #E2E2E2;transform:scaleY(1.08);transform-origin:0 18.38px;">US</div>
<div class="t" style="left:1106.50px;top:1928.74px;font-size:24px;line-height:24px;color:#E2E2E2;font-weight:400;font-family:'Liberation Mono', monospace;-webkit-text-stroke:0.35px #E2E2E2;transform:scaleY(1.08);transform-origin:0 18.38px;">1771977063496248064</div>
<div class="t" style="left:1426.50px;top:1928.74px;font-size:24px;line-height:24px;color:#E2E2E2;font-weight:400;font-family:'Liberation Mono', monospace;-webkit-text-stroke:0.35px #E2E2E2;transform:scaleY(1.08);transform-origin:0 18.38px;">GET</div>
<div class="t" style="left:1746.50px;top:1928.74px;font-size:24px;line-height:24px;color:#E2E2E2;font-weight:400;font-family:'Liberation Mono', monospace;-webkit-text-stroke:0.35px #E2E2E2;transform:scaleY(1.08);transform-origin:0 18.38px;">/assets/main.js</div>
<div class="t" style="left:2066.50px;top:1928.74px;font-size:24px;line-height:24px;color:#E2E2E2;font-weight:400;font-family:'Liberation Mono', monospace;-webkit-text-stroke:0.35px #E2E2E2;transform:scaleY(1.08);transform-origin:0 18.38px;">200</div>
<div class="t" style="left:2386.50px;top:1928.74px;font-size:24px;line-height:24px;color:#E2E2E2;font-weight:400;font-family:'Liberation Mono', monospace;-webkit-text-stroke:0.35px #E2E2E2;transform:scaleY(1.08);transform-origin:0 18.38px;">US</div>
</div>
<div id="frame"></div>
</div></body></html>
